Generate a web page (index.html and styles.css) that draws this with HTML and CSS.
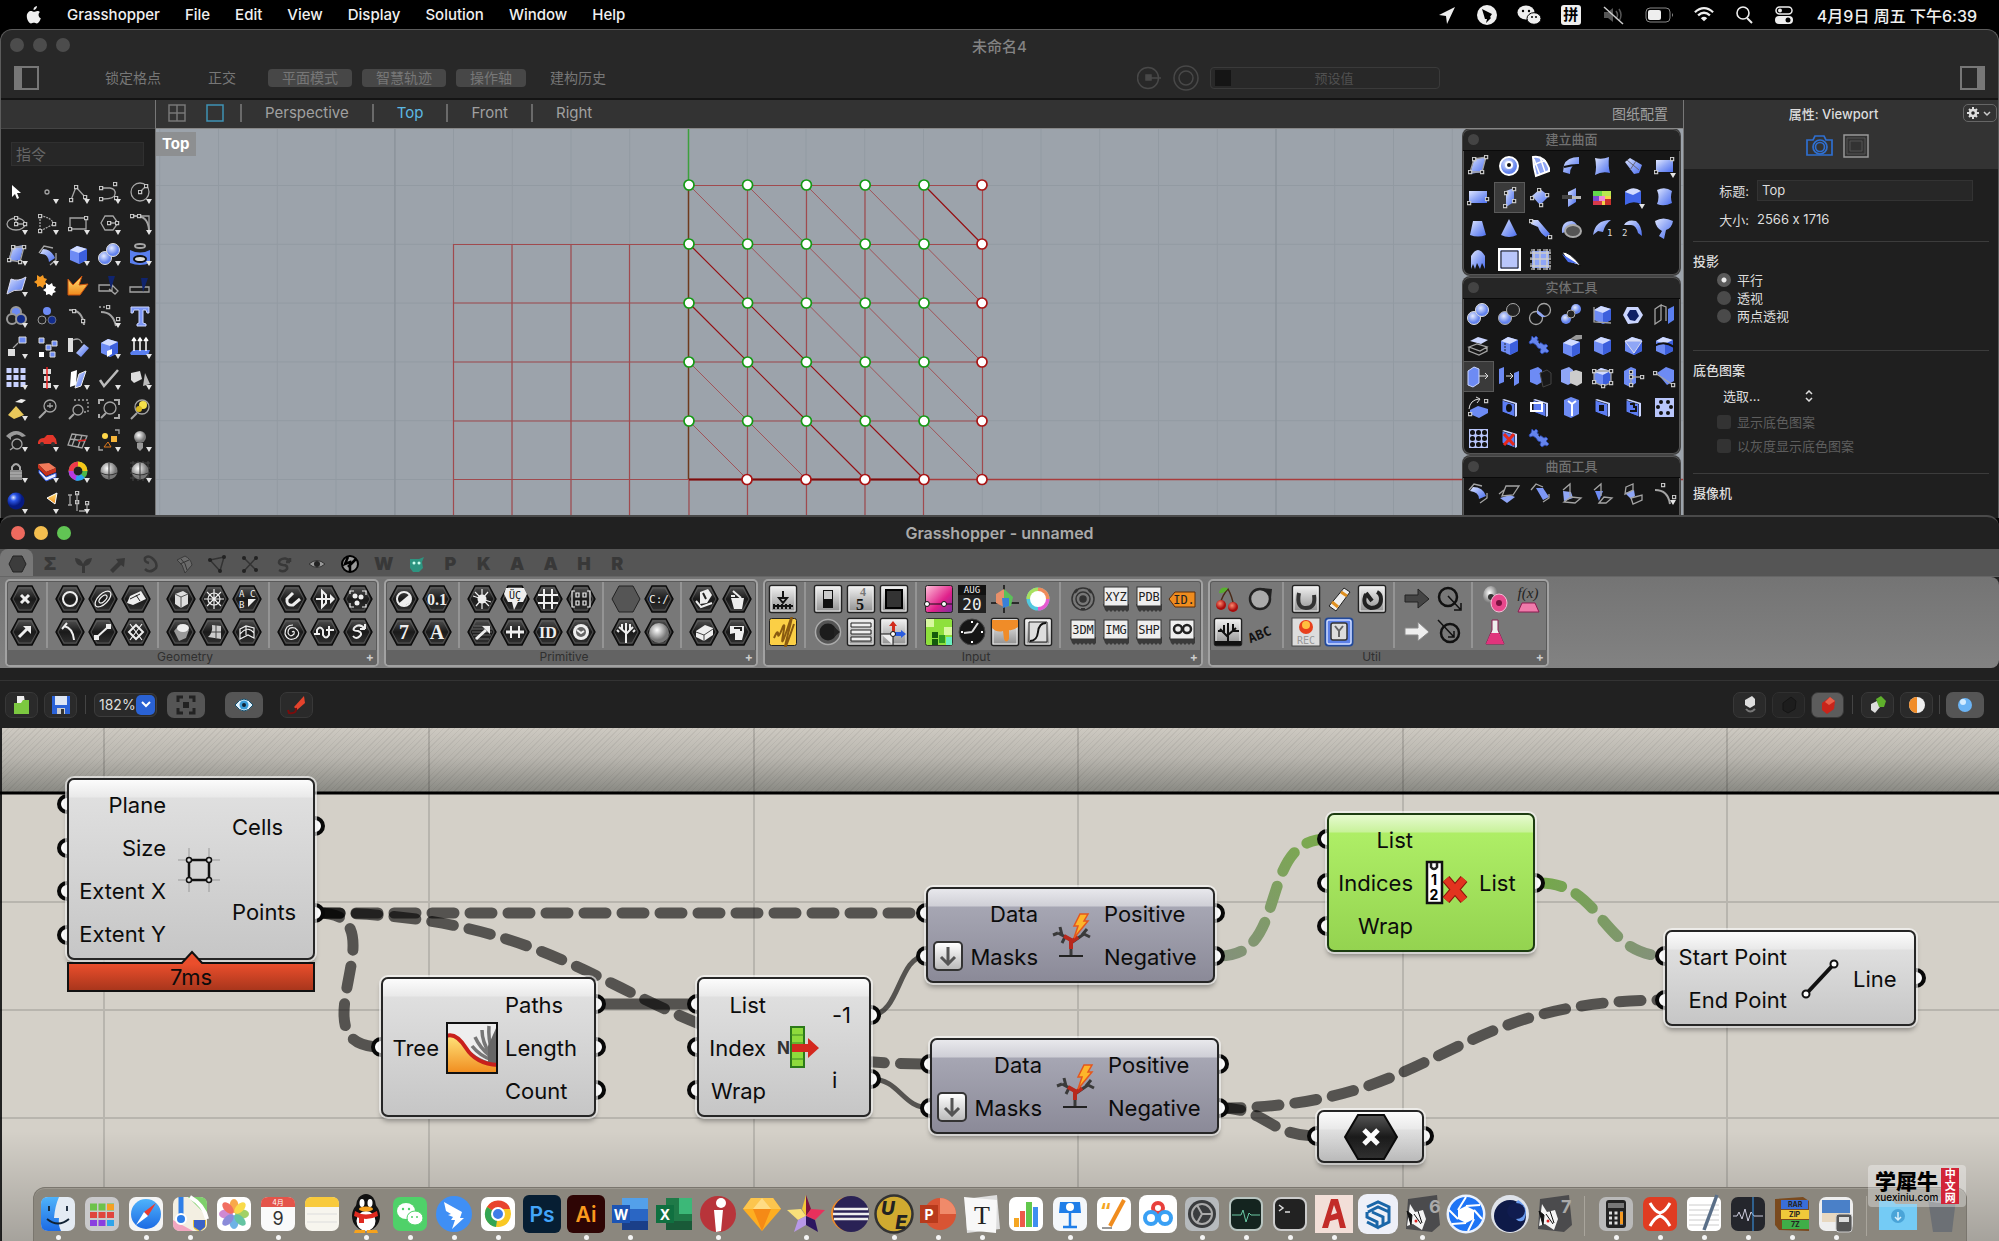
FILE: index.html
```html
<!DOCTYPE html>
<html lang="zh-CN">
<head>
<meta charset="utf-8">
<title>Grasshopper - unnamed</title>
<link rel="stylesheet" href="styles.css">
</head>
<body>
<svg class="defs" aria-hidden="true">
  <defs>
    <linearGradient id="blue" x1="0" y1="0" x2="1" y2="1"><stop offset="0" stop-color="#dfe6ff"/><stop offset=".5" stop-color="#8fa6f6"/><stop offset="1" stop-color="#4b6ef0"/></linearGradient>
    <radialGradient id="ball" cx=".4" cy=".35"><stop offset="0" stop-color="#e4eaff"/><stop offset="1" stop-color="#6484ee"/></radialGradient>
    <radialGradient id="deep" cx=".35" cy=".3"><stop offset="0" stop-color="#dfe8ff"/><stop offset=".4" stop-color="#2b56e8"/><stop offset="1" stop-color="#061a80"/></radialGradient>
    <radialGradient id="pearl" cx=".4" cy=".35"><stop offset="0" stop-color="#fff"/><stop offset="1" stop-color="#777"/></radialGradient>
    <radialGradient id="redball" cx=".4" cy=".35"><stop offset="0" stop-color="#ff8a70"/><stop offset="1" stop-color="#a80c0c"/></radialGradient>
    <linearGradient id="hexfill" x1="0" y1="0" x2="0" y2="1"><stop offset="0" stop-color="#555"/><stop offset=".5" stop-color="#1a1a1a"/><stop offset="1" stop-color="#333"/></linearGradient>
    <linearGradient id="silver" x1="0" y1="0" x2="0" y2="1"><stop offset="0" stop-color="#f4f4f4"/><stop offset="1" stop-color="#8d8d8d"/></linearGradient>
    <linearGradient id="gold" x1="0" y1="0" x2="0" y2="1"><stop offset="0" stop-color="#ffe37a"/><stop offset="1" stop-color="#f08a1c"/></linearGradient>
    <linearGradient id="pink" x1="0" y1="0" x2="1" y2="1"><stop offset="0" stop-color="#ffc3da"/><stop offset=".6" stop-color="#e0208a"/><stop offset="1" stop-color="#7a2e9e"/></linearGradient>
    <linearGradient id="sky" x1="0" y1="0" x2="0" y2="1"><stop offset="0" stop-color="#4fb3fb"/><stop offset="1" stop-color="#1c6ae4"/></linearGradient>
    <marker id="sq" viewBox="-3 -3 6 6" markerWidth="5" markerHeight="5" markerUnits="userSpaceOnUse"><rect x="-2" y="-2" width="4" height="4" fill="#222" stroke="#ccc" stroke-width="1.4"/></marker>
    <marker id="gdot" viewBox="-8 -8 16 16" markerWidth="16" markerHeight="16" markerUnits="userSpaceOnUse"><circle r="5" fill="#fff" stroke="#149a14" stroke-width="1.7"/></marker>
    <marker id="rdot" viewBox="-8 -8 16 16" markerWidth="16" markerHeight="16" markerUnits="userSpaceOnUse"><circle r="5" fill="#fff" stroke="#a81414" stroke-width="1.7"/></marker>
    <pattern id="grid" x="532" y="56" width="58.75" height="58.8" patternUnits="userSpaceOnUse"><path d="M.5 0V59M0 .5H59" stroke="#929aa2" fill="none"/></pattern>
    <symbol id="hex" viewBox="0 0 30 30"><path d="M8 2h14l7 13-7 13H8L1 15z" fill="url(#hexfill)" stroke="#0a0a0a" stroke-width="1.4"/><path d="M9 4h12l6 11-6 11H9L3 15z" fill="none" stroke="#666" stroke-width=".7"/></symbol>
    <symbol id="tile" viewBox="0 0 30 30"><rect x="1.500" y="1.500" width="27" height="27" rx="2" fill="url(#silver)" stroke="#222" stroke-width="1.5"/><rect x="3" y="3" width="24" height="24" fill="none" stroke="#eee"/></symbol>
    <symbol id="chip" viewBox="0 0 30 30"><path d="M2 20h26v6l-2 2-2-2-2 2-2-2-2 2-2-2-2 2-2-2-2 2-2-2-2 2-2-2z" fill="#3a3a3a"/><rect x="3" y="3" width="24" height="19" fill="#eee" stroke="#333"/></symbol>
    <symbol id="cube" viewBox="0 0 31 31"><path d="M7 11l7-4 10 3v11l-8 4-9-4z" fill="#6d8bf4"/><path d="M7 11l7-4 10 3-8 4z" fill="#d2dcff"/><path d="M16 14l8-4v11l-8 4z" fill="#3c5fdc"/></symbol>
    <symbol id="quad" viewBox="0 0 31 31"><path d="M11 8l12-2-4 15-12 2z" fill="url(#blue)"/></symbol>
    <symbol id="balls" viewBox="0 0 31 31"><circle cx="11" cy="19" r="6.500" fill="url(#ball)" stroke="#ddd"/><circle cx="19" cy="11" r="6.500" fill="url(#ball)" stroke="#ddd"/></symbol>
    <symbol id="plate" viewBox="0 0 31 31"><path d="M8 8l13 4v13L8 20z" fill="#5c7cf2" stroke="#111"/><path d="M8 8l2-1 13 4-2 1zM21 12l2-1v13l-2 1z" fill="#cbd6ff"/></symbol>
    <symbol id="fig" viewBox="0 0 31 31"><path d="M7 7l3 2 3-2 1 3 3 1-2 3 2 2-3 1-1 3-3-2-3 1 0-3-3-2 3-2z"/></symbol>
    <symbol id="figs" viewBox="0 0 31 31"><path d="M7 6l2 2 2-2 2 2-1 2 3 2 4 3 2-1 2 2-2 2 3 3-2 2-2-1-3 2-2-2 1-3-3-1-2-3-3-2-3 1-1-2 2-2z" fill="#6484ee" stroke="#2a48b0" stroke-width=".8"/><path d="M13 12l3-2-1 4z" fill="#161616"/></symbol>
    <symbol id="bolt" viewBox="0 0 44 46"><path d="M22 42V27L9 20M22 30l13-9M13 22l-2-8M9 20l-5 2M33 22l5-6M35 21l6 3M16 24l-3 6" fill="none" stroke="#3a3a3a" stroke-width="3"/><path d="M22 36V27l-7-4M22 29l7-5" fill="none" stroke="#b8281c" stroke-width="4"/><path d="M10 43h24" stroke="#222" stroke-width="2"/><path d="M31 1h8l-4 7h4L25 25l4-12h-4z" fill="#fdb52a" stroke="#e4571e" stroke-width="1.500"/></symbol>
    <symbol id="rhino" viewBox="0 0 40 40"><path d="M6 5l29-4 3 30-8 7-26-3z" fill="#4b4b4d"/><path d="M8 10l5 8 8-2 3 9-4 11-9-6-6 2z" fill="#f4f4f4"/><path d="M5 17l5 4-1 10zM12 20l7 10M16 17l4 12" stroke="#111" fill="#111"/><circle cx="14" cy="27" r="1.500" fill="#d22"/></symbol>
  </defs>
</svg>

<header class="menubar">
  <nav class="menus" aria-label="Menu">
    <button class="apple" aria-label="Apple"><svg viewBox="0 0 16 20" width="16" height="20"><path d="M11 1c0 2-1.500 4-3.500 4C7.300 3 9 1.300 11 1zM14 7c-2 1.300-2 5 .8 6.300C14 16 12.500 18.500 10.800 18.500c-1.200 0-1.600-.7-2.900-.7s-1.800.7-2.900.7C3 18.500.8 14.500.8 11.300.8 8 3 6 5 6c1.300 0 2.200.8 3.100.8S10 5.900 11.400 5.900c1 0 2 .4 2.600 1.100z" fill="#eee"/></svg></button>
    <button>Grasshopper</button><button>File</button><button>Edit</button><button>View</button><button>Display</button><button>Solution</button><button>Window</button><button>Help</button>
  </nav>
  <div class="status">
    <svg viewBox="0 0 20 20"><path d="M18 2L2 10l7 1 1 8z"/></svg>
    <svg viewBox="0 0 20 20"><circle cx="10" cy="10" r="10"/><path d="M5 4l10 5-2 3 1 1-5 5 1-4-2 0z" fill="#000"/></svg>
    <svg viewBox="0 0 24 20" class="wide"><ellipse cx="9" cy="7.500" rx="8.500" ry="7"/><circle cx="6" cy="6" r="1.200" fill="#000"/><circle cx="12" cy="6" r="1.200" fill="#000"/><ellipse cx="17" cy="13.500" rx="7" ry="5.800" stroke="#000"/><circle cx="15" cy="12" r="1" fill="#000"/><circle cx="19" cy="12" r="1" fill="#000"/></svg>
    <b class="ime">拼</b>
    <svg viewBox="0 0 24 20" class="wide"><path d="M3 7h4l5-4v14l-5-4H3z" fill="#555"/><path d="M15 6q3 4 0 8M18 4q4 6 0 12" stroke="#555" fill="none" stroke-width="1.500"/><path d="M3 2l19 17" stroke="#ccc" stroke-width="1.500"/></svg>
    <svg viewBox="0 0 29 20" class="wider"><rect x="1" y="3" width="24" height="14" rx="4" fill="none" stroke="#888"/><rect x="3" y="5" width="13" height="10" rx="2"/><path d="M27 8q2 2 0 4z" fill="#888"/></svg>
    <svg viewBox="0 0 22 20"><path d="M1 7q10-9 20 0M4.500 10.500q6.500-6 13 0" fill="none" stroke="#eee" stroke-width="2.500"/><path d="M7.500 13.500q3.500-3 7 0L11 17z"/></svg>
    <svg viewBox="0 0 20 20"><circle cx="9" cy="8" r="6" fill="none" stroke="#eee" stroke-width="1.600"/><path d="M13 13l5 5" stroke="#eee" stroke-width="2"/></svg>
    <svg viewBox="0 0 20 20"><rect x="2" y="2" width="16" height="7" rx="3.500" fill="none" stroke="#eee" stroke-width="1.500"/><circle cx="6" cy="5.500" r="2"/><rect x="1" y="11" width="18" height="8" rx="4"/><circle cx="14" cy="15" r="2.500" fill="#000"/></svg>
    <time>4月9日 周五 下午6:39</time>
  </div>
</header>

<section class="rhino">
  <div class="titlebar"><span class="lights off"><i></i><i></i><i></i></span><h1>未命名4</h1></div>
  <div class="osnap">
    <svg width="25" height="24" viewBox="0 0 25 24"><path d="M1 1h23v22H1z" fill="none" stroke="#777" stroke-width="2"/><path d="M1 1h7v22H1z" fill="#777"/></svg>
    <div class="modes"><button>锁定格点</button><button>正交</button><button class="on">平面模式</button><button class="on">智慧轨迹</button><button class="on">操作轴</button><button>建构历史</button></div>
    <div class="presets">
      <svg width="62" height="26" viewBox="0 0 62 26" fill="none" stroke="#484848" stroke-width="1.500"><circle cx="11" cy="13" r="10.500"/><path d="M12 13h12"/><path d="M9 10h5v5H9z" fill="#484848"/><circle cx="49" cy="13" r="12"/><circle cx="49" cy="13" r="7"/></svg>
      <button class="preset"><i></i><span>预设值</span></button>
    </div>
    <svg width="25" height="24" viewBox="0 0 25 24"><path d="M1 1h23v22H1z" fill="none" stroke="#777" stroke-width="2"/><path d="M17 1h7v22h-7z" fill="#777"/></svg>
  </div>
  <div class="work">
    <aside class="left">
      <div class="strip"></div>
      <input class="cmd" type="text" placeholder="指令" aria-label="指令">
      <div class="tools five">
        <button><svg viewBox="0 0 31 31"><path d="M11 8v12l3-3 2 5 2-1-2-5h4z" fill="#fff"/></svg></button>
        <button class="m"><svg viewBox="0 0 31 31"><circle class="l" cx="15" cy="15" r="2"/></svg></button>
        <button class="m"><svg viewBox="0 0 31 31"><path class="k" d="M8 23l5-13 9 10"/></svg></button>
        <button class="m"><svg viewBox="0 0 31 31"><path class="l" d="M9 11h7q6 1 5 6 0 5-12 5"/><path class="k0" d="M7 11L21 7 22 21 7 22"/></svg></button>
        <button class="m"><svg viewBox="0 0 31 31"><circle class="l" cx="15" cy="15" r="9"/><path class="k" d="M15 15l6-6"/></svg></button>

        <button class="m"><svg viewBox="0 0 31 31"><ellipse class="l" cx="15" cy="16" rx="9" ry="6"/><path class="k" d="M15 10v6h9"/></svg></button>
        <button class="m"><svg viewBox="0 0 31 31"><path class="l" d="M8 8v15M8 8q11 1 14 8L8 23" stroke-dasharray="2 1"/><path class="k0" d="M8 8l14 8-14 7"/></svg></button>
        <button class="m"><svg viewBox="0 0 31 31"><path class="l" d="M7 10h16v11H7z"/><path class="k0" d="M7 21L23 10"/></svg></button>
        <button class="m"><svg viewBox="0 0 31 31"><path class="l" d="M11 8h8l5 7-5 7h-8l-4-7z"/><path class="k" d="M15 15h8"/></svg></button>
        <button class="m"><svg viewBox="0 0 31 31"><path class="l w" d="M9 8q14-1 15 14"/><path class="l" d="M9 8h15v14"/><path class="k" d="M7 8h7"/></svg></button>

        <button class="m"><svg viewBox="0 0 31 31"><use href="#quad"/><path class="k" d="M12 8h11l-4 15-11-2z"/></svg></button>
        <button class="m"><svg viewBox="0 0 31 31"><path d="M11 10q8 0 12 9l-6 4q-1-9-9-8z" fill="url(#blue)"/><path class="l" d="M7 14l5-7 9 2M18 26l6-5v-7"/></svg></button>
        <button class="m"><svg viewBox="0 0 31 31"><use href="#cube"/></svg></button>
        <button class="m"><svg viewBox="0 0 31 31"><use href="#balls"/></svg></button>
        <button class="m"><svg viewBox="0 0 31 31"><ellipse class="l w" cx="15" cy="7" rx="5" ry="2"/><path d="M5 11q10 5 20 0v13q-10 4-20 0z" fill="#5a7ff0"/><ellipse cx="15" cy="20" rx="6" ry="3" fill="#ddd" stroke="#111" stroke-width="2"/></svg></button>

        <button class="m"><svg viewBox="0 0 31 31"><path d="M10 9q7 3 15-2l-4 13q-8-1-15 4z" fill="url(#blue)" stroke="#dde" /></svg></button>
        <button><svg viewBox="0 0 31 31"><use href="#fig" x="-2" y="-2" fill="#f59a23"/><use href="#fig" x="7" y="6" fill="#fff"/></svg></button>
        <button><svg viewBox="0 0 31 31"><path d="M5 25V9l5 6 9-9-3 9 9-1-8 11z" fill="url(#gold)" stroke="#c8500c"/></svg></button>
        <button><svg viewBox="0 0 31 31"><path class="l" d="M5 15h13v6H5zM18 15l6 6-3 3-6-5"/><path d="M14 6h7l-4 13z" fill="#10246e"/></svg></button>
        <button><svg viewBox="0 0 31 31"><path class="l" d="M5 17h19v5H5z"/><path d="M16 8h7l-5 14z" fill="#10246e"/></svg></button>

        <button class="m"><svg viewBox="0 0 31 31"><circle cx="15" cy="11" r="5" fill="#6d8bf4" stroke="#999" stroke-width="2"/><circle cx="11" cy="18" r="5" fill="#222" stroke="#999" stroke-width="2"/><circle cx="20" cy="18" r="5" fill="#122c8c" stroke="#999" stroke-width="2"/></svg></button>
        <button><svg viewBox="0 0 31 31"><circle cx="15" cy="10" r="4" fill="#6d8bf4"/><circle cx="10" cy="19" r="4" fill="#222" stroke="#999"/><circle cx="20" cy="19" r="4" fill="#122c8c" stroke="#999" stroke-width=".6"/></svg></button>
        <button><svg viewBox="0 0 31 31"><path class="l w" d="M6 9q13-1 15 15"/><path class="k0" d="M11 10l9 10"/></svg></button>
        <button class="m"><svg viewBox="0 0 31 31"><path class="l w" d="M7 11q12 0 15 14"/><path class="k0" d="M14 6l10 12"/><path class="l" d="M5 6h8" stroke-dasharray="2 2"/></svg></button>
        <button><svg viewBox="0 0 31 31"><path d="M6 6h18v6h-2l-1-3h-3v13l3 1v2h-9v-2l2-1V9H9l-1 3H6z" fill="#7d97f5" stroke="#ccd6ff"/></svg></button>

        <button class="m"><svg viewBox="0 0 31 31"><path d="M18 5h7v6h-7z" fill="#6d8bf4" stroke="#ddd"/><path d="M7 17h7v7H7z" fill="#ddd"/><path class="l" d="M12 16l5-5"/></svg></button>
        <button><svg viewBox="0 0 31 31"><path d="M7 6h5v5H7zM14 13h5v5h-5zM20 9h5v5h-5zM18 20h5v5h-5z" fill="#6d8bf4" stroke="#ddd"/><path d="M7 20h5v5H7z" fill="#fff"/></svg></button>
        <button><svg viewBox="0 0 31 31"><path d="M5 6h5v14H5z" fill="#ddd"/><path d="M13 21L21 12l5 4-8 9z" fill="url(#blue)"/><path class="l" d="M10 8q7-3 9 3"/></svg></button>
        <button class="m"><svg viewBox="0 0 31 31"><use href="#cube"/><path d="M13 25v-6l5-2v5z" fill="#fff"/></svg></button>
        <button class="m"><svg viewBox="0 0 31 31"><path d="M5 21l3-3h17l-2 5H6z" fill="#5a7ff0"/><path d="M9 19V8M15 19V8M21 19V8M7 9l2-3 2 3M13 9l2-3 2 3M19 9l2-3 2 3" stroke="#fff" stroke-width="1.500" fill="none"/></svg></button>

        <button class="m"><svg viewBox="0 0 31 31"><path d="M8 5v21M15 5v21M22 5v21" stroke="#c8d2ff" stroke-width="5" stroke-dasharray="5 2"/></svg></button>
        <button class="m"><svg viewBox="0 0 31 31"><path d="M11 6h8v5h-8zM12 13h6v5h-6zM11 20h8v5h-8z" fill="#ddd"/><path d="M15 4v22" stroke="#e22" stroke-width="1.500"/></svg></button>
        <button class="m"><svg viewBox="0 0 31 31"><path d="M8 9l6-2-1 15-6 2z" fill="#fff"/><path d="M16 11l7-3-5 15-6 2z" fill="url(#blue)" stroke="#eee"/></svg></button>
        <button class="m"><svg viewBox="0 0 31 31"><path d="M6 17l4 6L24 7" fill="none" stroke="#bbb" stroke-width="2.500"/></svg></button>
        <button class="m"><svg viewBox="0 0 31 31"><path d="M6 10l9-2 2 8-8 4-3-3z" fill="#ddd"/><path d="M20 10l5 11-7 2z" fill="#bbb"/></svg></button>

        <button class="m"><svg viewBox="0 0 31 31"><path d="M15 12l8 9-10 4-6-4z" fill="#e9c85a"/><path d="M14 8l6-3 5 1-4 3z" fill="#eee"/></svg></button>
        <button><svg viewBox="0 0 31 31"><circle class="l" cx="18" cy="12" r="6"/><path class="l w" d="M7 24l7-7"/><path class="l" d="M15 12h6M18 9v5"/></svg></button>
        <button><svg viewBox="0 0 31 31"><path class="l" d="M11 6h14v12h-4" stroke-dasharray="2 2"/><circle class="l" cx="15" cy="16" r="5"/><path class="l w" d="M6 25l5-5"/></svg></button>
        <button><svg viewBox="0 0 31 31"><circle class="l" cx="16" cy="14" r="6"/><path class="l w" d="M7 24l5-5"/><path d="M5 10V6h5M20 6h5v5M25 20v4h-5M5 20v4" stroke="#aaa" fill="none" stroke-width="2"/></svg></button>
        <button><svg viewBox="0 0 31 31"><circle class="l" cx="17" cy="13" r="7"/><circle cx="18" cy="11" r="4" fill="#f4e04a"/><circle cx="14" cy="15" r="3" fill="#d8b820"/><path class="l w" d="M6 25l6-6"/></svg></button>

        <button class="m"><svg viewBox="0 0 31 31"><path d="M5 11q10-10 20 0l-4 1q-5-5-11 0v3z" fill="#999"/><circle class="l" cx="16" cy="19" r="5"/><path class="l" d="M9 25l4-3"/></svg></button>
        <button class="m"><svg viewBox="0 0 31 31"><path d="M6 17q1-4 6-4l3-3h6l3 4 1 5H6z" fill="#e2362a"/><circle cx="10" cy="19" r="2" fill="#333"/><circle cx="21" cy="19" r="2" fill="#333"/></svg></button>
        <button class="m"><svg viewBox="0 0 31 31"><path class="l" d="M9 9l15 2-5 12-14-3zM7 14l15 2M13 10l-4 11M19 10l-4 12"/><path d="M15 16l8-1" stroke="#d22" stroke-width="1.500"/></svg></button>
        <button class="m"><svg viewBox="0 0 31 31"><circle cx="11" cy="11" r="3" fill="#ffd84a"/><path d="M17 11h6v6h-6z" fill="#f5b53a"/><path d="M10 22l4-5 3 5z" fill="none" stroke="#e07a1c"/><path class="l" d="M21 5h4v4M5 21v4h4"/></svg></button>
        <button class="m"><svg viewBox="0 0 31 31"><circle cx="15" cy="12" r="6" fill="url(#pearl)"/><path d="M12 18h6v5l-3 3-3-3z" fill="#999"/></svg></button>

        <button class="m"><svg viewBox="0 0 31 31"><path d="M11 14v-3q4-6 8 0v3" fill="none" stroke="#aaa" stroke-width="2"/><path d="M9 14h12v10H9z" fill="#8a8a8a"/><path d="M9 17h12M9 20h12" stroke="#bbb"/></svg></button>
        <button class="m"><svg viewBox="0 0 31 31"><path d="M6 8l11-1 7 5-10 4z" fill="#f07a5a"/><path d="M6 8l8 8v4L6 12zM14 16l10-4v4l-10 4z" fill="#c8301c"/><path d="M7 14l7 7 10-4v4l-10 4-7-8z" fill="#e8ecff" stroke="#3358d8"/></svg></button>
        <button class="m"><svg viewBox="0 0 31 31" fill="none" stroke-width="5"><circle cx="15" cy="15" r="7" stroke="#4cb848"/><path d="M15 8a7 7 0 0 1 7 7" stroke="#f5c518"/><path d="M8 15a7 7 0 0 1 7-7" stroke="#ee3a4a"/><path d="M15 22a7 7 0 0 1-7-7" stroke="#b63ae0"/><path d="M20 20a7 7 0 0 1-7 2" stroke="#2aa0f0"/></svg></button>
        <button><svg viewBox="0 0 31 31"><circle cx="15" cy="15" r="8.500" fill="url(#pearl)"/><path d="M7 17q8 4 16 0M15 7v16" stroke="#333" fill="none"/></svg></button>
        <button class="m"><svg viewBox="0 0 31 31"><path d="M5 7h20M5 12h20M5 17h20M5 22h20M8 5v20M13 5v20M18 5v20M23 5v20" stroke="#444"/><circle cx="15" cy="15" r="8.500" fill="url(#pearl)"/><path d="M7 17q8 4 16 0M15 7v16" stroke="#333" fill="none"/></svg></button>

        <button class="m"><svg viewBox="0 0 31 31"><circle cx="15" cy="14" r="8.500" fill="url(#deep)"/></svg></button>
        <button class="m"><svg viewBox="0 0 31 31"><path d="M15 11l10-5-2 11z" fill="url(#gold)" stroke="#fff"/></svg></button>
        <button class="m"><svg viewBox="0 0 31 31"><path class="l" d="M7 8v10M5 8h4M5 18h4"/><path class="k0" d="M14 6V15L24 16"/><path class="l" d="M14 6V24M24 16v9M16 24h6"/></svg></button>
      </div>
    </aside>

    <main class="center">
      <div class="tabs">
        <svg width="18" height="18" viewBox="0 0 18 18"><path d="M1 1h16v16H1zM9 1v16M1 9h16" fill="none" stroke="#777" stroke-width="1.500"/></svg>
        <svg width="18" height="18" viewBox="0 0 18 18"><path d="M1 1h16v16H1z" fill="none" stroke="#3f93b5" stroke-width="1.500"/></svg>
        <i></i><button>Perspective</button><i></i><button class="on">Top</button><i></i><button>Front</button><i></i><button>Right</button>
        <button class="layout">图纸配置</button>
      </div>
      <div class="view">
        <svg class="scene" width="100%" height="100%">
          <rect width="100%" height="100%" fill="url(#grid)"/>
          <path d="M239 0V390M1120 0V390" stroke="#878f97" fill="none"/>
          <path d="M532.500 0V56" stroke="#3da03d" stroke-width="1.500"/>
          <path d="M533 350.500H3000" stroke="#a83c3c" stroke-width="1.300"/>
          <g fill="none" stroke="#a04a4e" stroke-width="1.200">
            <path d="M297.500 115.500H826M297.500 174H826M297.500 233H826M297.500 292H826M297.500 350.500H533M533 56.500H826M297.500 115V388M356 115V388M415 115V388M473.500 115V388M533 350V388M591.500 56V388M650.500 56V388M709 56V388M767.500 56V388M826.500 56V350"/>
            <path stroke-width=".9" d="M533 56L826 350M591 56L826 292M650 56L826 233M709 56L826 174M533 233L650 350M533 292L591 350"/>
            <path stroke="#951014" d="M768 56L826 115M533 115L768 350M533 174L709 350"/>
            <path stroke="#6e3a1c" stroke-width="1.500" d="M532.500 56V350"/><path stroke="#7c0c0c" stroke-width="1.800" d="M533 350.500H768"/>
          </g>
          <g class="gd"><path d="M533 56h58.600h58.800h58.800h58.800M533 115h58.600h58.800h58.800h58.800M533 174h58.600h58.800h58.800h58.800M533 233h58.600h58.800h58.800h58.800M533 292h58.600h58.800h58.800h58.800"/></g>
          <g class="rd"><path d="M826 56v59v59v59v59v58.500M591 350.500h59h59h59"/></g>
        </svg>
        <b class="vlabel">Top</b>
        <div class="palettes">
          <section class="pal"><h2><i></i>建立曲面</h2>
            <div class="tools seven">
              <button><svg viewBox="0 0 31 31"><use href="#quad"/><path class="k" d="M11 8l12-2-4 15-12 0z"/></svg></button>
              <button><svg viewBox="0 0 31 31"><circle cx="15" cy="15" r="9" fill="url(#ball)" stroke="#fff" stroke-width="2"/><circle cx="15" cy="14" r="3" fill="#111" stroke="#fff" stroke-width="2"/></svg></button>
              <button><svg viewBox="0 0 31 31"><path d="M8 6q11-2 16 11l0 3-13 5-2-9z" fill="#8fa6f6" stroke="#fff" stroke-width="2"/><path d="M9 8l6 16M15 6l5 15M9 14q7-4 12-4" stroke="#fff" stroke-width="1.500" fill="none"/></svg></button>
              <button><svg viewBox="0 0 31 31"><path d="M8 14q3-8 15-8v7q-9 0-9 10l-7-2z" fill="url(#blue)"/><path d="M8 16q7-2 15-2" stroke="#111" stroke-width="2" fill="none"/></svg></button>
              <button><svg viewBox="0 0 31 31"><path d="M8 7q7 2 14-1-1 9 1 16-8-2-15 2 2-8 0-17z" fill="url(#blue)"/></svg></button>
              <button><svg viewBox="0 0 31 31"><path d="M7 11l5-4 12 7-3 8-5 1z" fill="url(#blue)"/><path d="M9 9l12 10M18 10l-6 9" stroke="#667" fill="none"/></svg></button>
              <button class="m"><svg viewBox="0 0 31 31"><path d="M7 9h17v12H7z" fill="url(#blue)"/><path class="k0" d="M7 21L23 8"/></svg></button>
              <button><svg viewBox="0 0 31 31"><path d="M6 9h18v12H6z" fill="url(#blue)"/><path class="k0" d="M6 21L24 17"/></svg></button>
              <button class="sel"><svg viewBox="0 0 31 31"><path d="M12 9l8-3v14l-8 5z" fill="url(#blue)"/><path class="k0" d="M12 11L20 7V19L11 24"/></svg></button>
              <button><svg viewBox="0 0 31 31"><path d="M7 14l8-7 9 7-9 9z" fill="url(#blue)"/><path class="k0" d="M7 16l7-8 8 5-6 10"/></svg></button>
              <button><svg viewBox="0 0 31 31"><path d="M12 10l8-4v14l-8 5z" fill="url(#blue)"/><path d="M6 13h10v4H6z" fill="#444"/><path d="M16 14h9v3h-9z" fill="#bbb"/></svg></button>
              <button><svg viewBox="0 0 31 31"><path d="M6 9h18v14H6z" fill="#f3d24a"/><path d="M6 9h9v5H6z" fill="#62d84c"/><path d="M15 9h9v5h-9z" fill="#b8e850"/><path d="M6 14h6v5H6z" fill="#7a4ad0"/><path d="M12 14h6v5h-6z" fill="#f08ad8"/><path d="M6 19h9v4H6z" fill="#d83a4a"/><path d="M18 17h6v6h-6z" fill="#c8302c"/></svg></button>
              <button class="m"><svg viewBox="0 0 31 31"><path d="M7 9q8 4 16 0v13q-8-4-16 1z" fill="#4166e8"/><path d="M7 10q8-7 16-1l-8 4z" fill="#d2dcff"/></svg></button>
              <button><svg viewBox="0 0 31 31"><path d="M8 8q8-4 15 1-2 6 0 12-8 4-15 1 3-7 0-14z" fill="url(#blue)"/></svg></button>
              <button><svg viewBox="0 0 31 31"><path d="M10 8h9l4 14q-8 3-16 0z" fill="url(#blue)"/></svg></button>
              <button><svg viewBox="0 0 31 31"><path d="M15 6l8 16q-8 4-16 0z" fill="url(#blue)"/></svg></button>
              <button><svg viewBox="0 0 31 31"><path d="M6 7h7l12 14-4 3q-6-4-8-10l-7-3z" fill="url(#blue)"/><path class="k0" d="M6 8l19 16"/></svg></button>
              <button><svg viewBox="0 0 31 31"><path d="M6 20q-1-12 10-12 6 2 5 8" fill="url(#blue)"/><ellipse cx="17" cy="18" rx="8" ry="6" fill="#555" stroke="#aaa" stroke-width="2"/></svg></button>
              <button><svg viewBox="0 0 31 31"><path d="M6 22q2-15 18-15-6 4-8 12l-5-1z" fill="url(#blue)"/><text x="20" y="23">1</text></svg></button>
              <button><svg viewBox="0 0 31 31"><path d="M6 12q3-6 12-4 6 5 6 15l-4-3q-2-8-7-8z" fill="url(#blue)"/><text x="4" y="23">2</text></svg></button>
              <button><svg viewBox="0 0 31 31"><path d="M6 8q8-5 18 0-1 7-7 9l-2 9-5-3 3-5q-6-3-7-10z" fill="url(#blue)"/></svg></button>
              <button><svg viewBox="0 0 31 31"><path d="M8 25V12q7-12 14 0v13l-3-6-2 6-3-6-2 6-2-5z" fill="url(#blue)"/></svg></button>
              <button><svg viewBox="0 0 31 31"><path d="M5 5h21v21H5z" fill="#b9c6fb" stroke="#fff" stroke-width="2"/><path d="M7 7h17v17H7z" fill="none" stroke="#111"/></svg></button>
              <button><svg viewBox="0 0 31 31"><path d="M7 7h17v17H7z" fill="#8fa6f6"/><path d="M5 9h21M5 15h21M5 22h21M9 5v21M15 5v21M22 5v21" stroke="#ccc" stroke-width="1.500"/><path class="l" d="M6 6h19v19H6z" stroke-dasharray="3 3"/></svg></button>
              <button><svg viewBox="0 0 31 31"><path d="M6 8q7-1 19 14l-12-4z" fill="#fff" stroke="#111"/><path d="M6 10l16 10-10-2z" fill="#4b6ef0"/></svg></button>
            </div>
          </section>
          <section class="pal"><h2><i></i>实体工具</h2>
            <div class="tools seven">
              <button><svg viewBox="0 0 31 31"><use href="#balls"/></svg></button>
              <button><svg viewBox="0 0 31 31"><circle cx="11" cy="19" r="6.500" fill="url(#ball)" stroke="#aaa"/><circle cx="19" cy="11" r="6.500" fill="#222" stroke="#aaa"/></svg></button>
              <button><svg viewBox="0 0 31 31"><circle class="l" cx="11" cy="19" r="6.500"/><circle class="l" cx="19" cy="11" r="6.500"/><path d="M13 13l5 4-1 0-4-3z" fill="#8fa6f6" stroke="#8fa6f6" stroke-width="2"/></svg></button>
              <button><svg viewBox="0 0 31 31"><circle cx="10" cy="20" r="5" fill="url(#ball)"/><circle cx="20" cy="10" r="5" fill="url(#ball)"/><circle cx="15" cy="15" r="4" fill="#222" stroke="#aaa"/></svg></button>
              <button><svg viewBox="0 0 31 31"><use href="#cube"/><path class="l" d="M7 8v15l17 1"/></svg></button>
              <button><svg viewBox="0 0 31 31"><path d="M9 8h11l5 8-5 8-10 1-5-9z" fill="#cbd6ff"/><path d="M12 11h6l3 6-4 5-5-1-3-5z" fill="#0f1f66"/></svg></button>
              <button><svg viewBox="0 0 31 31"><path class="l" d="M6 10l6-4v15l-6 4zM12 6l5 2v14"/><path d="M19 10l6-3v14l-6 4z" fill="#5a7ff0"/></svg></button>
              <button><svg viewBox="0 0 31 31"><path d="M7 11l8-4 10 3-7 4z" fill="#cbd6ff"/><path class="l" d="M6 17l8-3 10 3-7 4zM6 17v4l10 4 8-4v-4"/></svg></button>
              <button><svg viewBox="0 0 31 31"><use href="#cube"/><path d="M11 13v10" stroke="#223" stroke-dasharray="2 1"/></svg></button>
              <button><svg viewBox="0 0 31 31"><use href="#figs"/></svg></button>
              <button><svg viewBox="0 0 31 31"><use href="#cube" y="2"/><path d="M14 9l6-4 6 0v4l-6 1z" fill="#999"/></svg></button>
              <button><svg viewBox="0 0 31 31"><use href="#cube"/></svg></button>
              <button><svg viewBox="0 0 31 31"><use href="#cube"/><path d="M7 11l17 0-8 12z" fill="#8fa6f6" stroke="#dde"/></svg></button>
              <button><svg viewBox="0 0 31 31"><use href="#cube"/><path d="M5 16q10-6 20 1" fill="none" stroke="#111" stroke-width="2"/></svg></button>
              <button class="sel"><svg viewBox="0 0 31 31"><path d="M5 10l6-4 5 2v14l-6 4-5-2z" fill="#6d8bf4" stroke="#cbd6ff"/><path d="M16 15h9M22 12l3 3-3 3" fill="none" stroke="#ddd"/></svg></button>
              <button><svg viewBox="0 0 31 31"><path d="M5 8l5-2v15l-5 2zM20 12l5-2v12l-5 3z" fill="#6d8bf4"/><path d="M12 15h7M16 12l3 3-3 3" fill="none" stroke="#ddd"/></svg></button>
              <button><svg viewBox="0 0 31 31"><path d="M5 9l8-3 4 3v12l-5 3-7-3z" fill="#6d8bf4"/><path d="M15 12l7-3 4 3v11l-8 3z" fill="#191919" stroke="#444"/></svg></button>
              <button><svg viewBox="0 0 31 31"><path d="M5 9l8-3 4 3v12l-5 3-7-3z" fill="#8fa6f6"/><path d="M14 11l6-2 6 2v11l-5 3-7-3z" fill="#ccc"/></svg></button>
              <button><svg viewBox="0 0 31 31"><use href="#cube"/><path class="k" d="M7 10l17 0v12l-8 3-9-4z"/></svg></button>
              <button><svg viewBox="0 0 31 31"><path d="M6 10l7-4 5 2v14l-6 4-6-3z" fill="#6d8bf4"/><path class="k" d="M13 11v13M13 16h11"/></svg></button>
              <button><svg viewBox="0 0 31 31"><path d="M8 12l9-6 8 3v11l-7 4z" fill="#6d8bf4"/><path class="k" d="M6 12l18 12"/></svg></button>
              <button><svg viewBox="0 0 31 31"><path d="M7 18l8-4 10 3v4l-9 5-9-4z" fill="#6d8bf4"/><path d="M6 17q1-9 10-10M13 5l4 2-3 4" fill="none" stroke="#ddd"/><path class="k0" d="M23 9L7 22"/></svg></button>
              <button><svg viewBox="0 0 31 31"><use href="#plate"/><ellipse cx="15" cy="16" rx="3" ry="4" fill="#111"/></svg></button>
              <button><svg viewBox="0 0 31 31"><use href="#plate"/><path d="M6 11h11v8H6z" fill="none" stroke="#fff" stroke-width="2"/></svg></button>
              <button><svg viewBox="0 0 31 31"><path d="M8 8l7-3 8 3v14l-8 4-7-3z" fill="#6d8bf4"/><path d="M12 9l4 3 4-3M16 12v12" stroke="#fff" stroke-width="2" fill="none"/></svg></button>
              <button><svg viewBox="0 0 31 31"><use href="#plate"/><path d="M12 13h5v6h-5z" fill="#111"/></svg></button>
              <button><svg viewBox="0 0 31 31"><use href="#plate"/><path d="M12 12h4v4M12 19h6v-5" stroke="#111" stroke-width="2" fill="none"/></svg></button>
              <button><svg viewBox="0 0 31 31"><path d="M6 6h19v19H6z" fill="#b9c6fb"/><g fill="#111"><circle cx="12" cy="10" r="2"/><circle cx="19" cy="10" r="2"/><circle cx="22" cy="15" r="2"/><circle cx="19" cy="21" r="2"/><circle cx="12" cy="21" r="2"/><circle cx="9" cy="15" r="2"/></g></svg></button>
              <button><svg viewBox="0 0 31 31"><path d="M6 6h19v19H6z" fill="#b9c6fb"/><g stroke="#111" stroke-width="5" stroke-linecap="round" stroke-dasharray="0 6"><path d="M9.500 9.500h13M9.500 15.500h13M9.500 21.500h13"/></g></svg></button>
              <button><svg viewBox="0 0 31 31"><use href="#plate"/><path d="M10 11l10 11M20 11L10 22" stroke="#e8281c" stroke-width="3"/></svg></button>
              <button><svg viewBox="0 0 31 31"><use href="#figs"/></svg></button>
            </div>
          </section>
          <section class="pal last"><h2><i></i>曲面工具</h2>
            <div class="tools seven">
              <button><svg viewBox="0 0 31 31"><path d="M10 9q10 0 13 9l-7 3q0-7-9-8z" fill="url(#blue)"/><path class="l" d="M6 12l5-6 8 2M17 25l7-5v-5"/></svg></button>
              <button><svg viewBox="0 0 31 31"><path d="M6 20l10-3 5 2-8 6z" fill="#8fa6f6"/><path class="l" d="M12 8l13 0-6 9-11 1zM5 16l5-4"/></svg></button>
              <button><svg viewBox="0 0 31 31"><path d="M11 10h7l6 9-6 3z" fill="#7d97f5"/><path class="l" d="M6 12l5-6 7 3M18 24l6-4v-4"/></svg></button>
              <button><svg viewBox="0 0 31 31"><path d="M7 13l8 1 2 6-9 3z" fill="#8fa6f6"/><path class="l" d="M7 12l7-6v12M8 24l7-5 10 1-6 5z"/></svg></button>
              <button><svg viewBox="0 0 31 31"><path d="M8 13h8l-4 10z" fill="#6d8bf4"/><path class="l" d="M7 12l7-6v12M12 25l5-6 8 1-6 5z"/></svg></button>
              <button><svg viewBox="0 0 31 31"><path d="M7 15l9-3 1 6-4 3z" fill="#8fa6f6"/><path class="l" d="M8 9l7-3v6l-8 4zM13 20l11-3v5l-9 4z"/></svg></button>
              <button class="m"><svg viewBox="0 0 31 31"><path class="l w" d="M6 12q13 0 15 14"/><path class="k0" d="M14 7l11 12"/></svg></button>
            </div>
          </section>
        </div>
      </div>
    </main>

    <aside class="right">
      <div class="strip"><h2>属性: Viewport</h2><button class="gear" aria-label="选项"><svg width="30" height="14" viewBox="0 0 30 14"><path d="M8 1v12M2 7h12M4 3l8 8M12 3l-8 8" stroke="#ddd" stroke-width="2"/><circle cx="8" cy="7" r="3" fill="#222" stroke="#ddd" stroke-width="2.500"/><path d="M19 6l3 3 3-3" fill="none" stroke="#ccc" stroke-width="1.500"/></svg></button></div>
      <div class="pages">
        <svg width="28" height="22" viewBox="0 0 28 22" fill="none" stroke="#2f6fd0" stroke-width="1.700"><path d="M1 5h6l2-4h9l2 4h6v15H1z"/><circle cx="14" cy="12" r="7"/><circle cx="14" cy="12" r="4.500"/></svg>
        <svg width="26" height="24" viewBox="0 0 26 24" fill="none"><path d="M1 1h24v22H1z" stroke="#999" stroke-width="1.500"/><path d="M4 4h18v16H4zM7 7h12v10H7z" stroke="#555"/></svg>
      </div>
      <div class="props">
        <div class="row"><label for="ttl">标题:</label><input id="ttl" type="text" value="Top"></div>
        <div class="row"><span>大小:</span><span class="num">2566 x 1716</span></div>
        <hr>
        <h3>投影</h3>
        <div class="opts">
          <label><input type="radio" name="proj" checked>平行</label>
          <label><input type="radio" name="proj">透视</label>
          <label><input type="radio" name="proj">两点透视</label>
        </div>
        <hr>
        <h3>底色图案</h3>
        <div class="pick"><select aria-label="底色图案"><option>选取...</option></select><svg width="8" height="12" viewBox="0 0 8 12"><path d="M1 4l3-3 3 3M1 8l3 3 3-3" fill="none" stroke="#ddd" stroke-width="1.500"/></svg></div>
        <div class="checks">
          <label><input type="checkbox" disabled>显示底色图案</label>
          <label><input type="checkbox" disabled>以灰度显示底色图案</label>
        </div>
        <hr>
        <h3>摄像机</h3>
      </div>
    </aside>
  </div>
</section>

<section class="gh">
  <div class="ghtitle"><span class="lights"><i></i><i></i><i></i></span><h1>Grasshopper - unnamed</h1></div>
  <div class="cats">
    <button class="on"><svg viewBox="0 0 20 20"><path d="M6 2h9l4 8-4 8H6l-4-8z" fill="#3c3c3c" stroke="#222"/></svg></button>
    <button>Σ</button>
    <button><svg viewBox="0 0 20 20"><path d="M9 19v-7Q2 11 2 4q6 0 8 6 2-6 9-6-1 7-7 8v7z"/></svg></button>
    <button><svg viewBox="0 0 20 20"><path d="M3 16l8-8-2-3 9-1-1 9-3-2-8 8z"/></svg></button>
    <button><svg viewBox="0 0 20 20"><path class="s" d="M9 9Q4 8 5 4q3-3 7 0 6 5 4 10-6 6-11 1"/></svg></button>
    <button><svg viewBox="0 0 20 20"><path d="M3 6l8-4q6 3 7 9l-7 8-3-8z" fill="#6a6a6a" stroke="#3a3a3a"/><path d="M7 5q5 4 6 11M6 10l9-4" stroke="#333" fill="none"/></svg></button>
    <button><svg viewBox="0 0 20 20"><path class="t1" d="M3 6l14-3-4 14z"/><g fill="#222"><circle cx="3" cy="6" r="2"/><circle cx="17" cy="3" r="2"/><circle cx="13" cy="17" r="2"/></g></svg></button>
    <button><svg viewBox="0 0 20 20"><path class="t1" d="M4 17L16 4M4 4l12 12"/><g fill="#222"><circle cx="4" cy="17" r="2"/><circle cx="16" cy="4" r="2"/><circle cx="4" cy="4" r="2"/><circle cx="16" cy="16" r="2"/></g></svg></button>
    <button><svg viewBox="0 0 20 20"><path class="s" d="M16 8Q12 2 6 6q-3 4 3 5 5 0 4 4-3 4-8 1M16 8V4M16 8h-4"/></svg></button>
    <button><svg viewBox="0 0 20 20"><path d="M2 10q8-7 16 0-8 7-16 0z" fill="#999" stroke="#333"/><circle cx="10" cy="10" r="3" fill="#222"/></svg></button>
    <button><svg viewBox="0 0 20 20"><circle cx="10" cy="10" r="8" fill="#999" stroke="#000" stroke-width="2"/><path d="M10 18V8l-5 2 3-7M16 5l-8 8" stroke="#000" stroke-width="2.500" fill="none"/></svg></button>
    <button>W</button>
    <button><svg viewBox="0 0 20 20"><path d="M3 5h9l5-2-2 5 1 6-4 4H6l-3-4z" fill="#2e9480"/><circle cx="7" cy="9" r="1.500" fill="#cfe"/><circle cx="12" cy="9" r="1.500" fill="#cfe"/></svg></button>
    <button>P</button><button>K</button><button>A</button><button>A</button><button>H</button><button>R</button>
  </div>
  <div class="ribbon">
    <section class="grp"><div class="secs">
      <div class="sec">
        <button><svg viewBox="0 0 30 30"><use href="#hex"/><path class="h3" d="M11 11l8 8M19 11l-8 8"/></svg></button>
        <button><svg viewBox="0 0 30 30"><use href="#hex"/><path class="h3" d="M9 20l8-8"/><path class="f" d="M13 9h8v8z"/></svg></button>
      </div>
      <div class="sec c3">
        <button><svg viewBox="0 0 30 30"><use href="#hex"/><circle class="h2" cx="15" cy="15" r="7"/></svg></button>
        <button><svg viewBox="0 0 30 30"><use href="#hex"/><ellipse class="h1" cx="15" cy="15" rx="10" ry="5" transform="rotate(-45 15 15)"/><ellipse class="h1" cx="15" cy="15" rx="5" ry="2.500" transform="rotate(-45 15 15)"/></svg></button>
        <button><svg viewBox="0 0 30 30"><use href="#hex"/><path class="f" d="M9 12l11-5 5 8-13 6-6-2z"/><path d="M15 11l4 6M9 15l10-5" stroke="#222"/></svg></button>
        <button><svg viewBox="0 0 30 30"><use href="#hex"/><path class="h2" d="M9 9q9 2 10 14M7 12l5-6"/></svg></button>
        <button><svg viewBox="0 0 30 30"><use href="#hex"/><path class="h2" d="M9 20l11-10"/><path class="f" d="M6 18h5v5H6zM18 7h5v5h-5z"/></svg></button>
        <button><svg viewBox="0 0 30 30"><use href="#hex"/><path class="h2" d="M15 8l7 7-7 7-7-7z"/><path class="h1" d="M9 7l12 16M21 7L9 23"/></svg></button>
      </div>
      <div class="sec c3">
        <button><svg viewBox="0 0 30 30"><use href="#hex"/><path d="M9 10l8-3 5 3v10l-7 4-6-4z" fill="#ddd"/><path d="M15 13v11M9 10l6 3 7-3" stroke="#555" fill="none"/></svg></button>
        <button><svg viewBox="0 0 30 30"><use href="#hex"/><circle class="h1" cx="15" cy="15" r="6"/><path class="h1" d="M15 5v20M5 15h20M8 8l14 14M22 8L8 22"/></svg></button>
        <button><svg viewBox="0 0 30 30"><use href="#hex"/><text x="7" y="13" font-size="9">A</text><text x="18" y="13" font-size="9">C</text><text x="7" y="24" font-size="9">B</text><path class="f" d="M16 15h8l-8 8z"/></svg></button>
        <button><svg viewBox="0 0 30 30"><use href="#hex"/><path d="M8 14l6-7 9 6-3 8-7 3z" fill="#999"/><ellipse cx="17" cy="11" rx="6" ry="4" fill="#eee"/></svg></button>
        <button><svg viewBox="0 0 30 30"><use href="#hex"/><path d="M9 20q5-4 4-12l9 1v13z" fill="#ccc"/><path d="M17 8v13M12 15h10" stroke="#444"/></svg></button>
        <button><svg viewBox="0 0 30 30"><use href="#hex"/><path class="h1" d="M8 12l6-3 8 2v10l-6-3-8 4zM14 9v9M8 17q8-9 14-1"/></svg></button>
      </div>
      <div class="sec c3">
        <button><svg viewBox="0 0 30 30"><use href="#hex"/><path class="h3" d="M16 9l-6 6q-1 7 6 6l7-6"/></svg></button>
        <button><svg viewBox="0 0 30 30"><use href="#hex"/><path class="h2" d="M6 15h15M12 7v16l4-4V11z"/><path class="f" d="M20 10l5 5-5 5z"/></svg></button>
        <button><svg viewBox="0 0 30 30"><use href="#hex"/><path class="h1" d="M7 10V7h4M19 7h4v4M23 20v3h-4M11 23H7v-4"/><g class="f"><circle cx="12" cy="12" r="2.500"/><circle cx="18" cy="13" r="2.500"/><circle cx="14" cy="19" r="2.500"/></g></svg></button>
        <button><svg viewBox="0 0 30 30"><use href="#hex"/><path class="h1" d="M15 15q3-2 2 2-4 4-6-1 0-7 7-5 7 5 1 10-8 4-11-4 0-9 8-9"/></svg></button>
        <button><svg viewBox="0 0 30 30"><use href="#hex"/><path class="h2" d="M7 17v-4q3-5 6 0v5q3 5 6 0v-5M19 9v5M4 17h6M16 13h8"/></svg></button>
        <button><svg viewBox="0 0 30 30"><use href="#hex"/><path class="h2" d="M22 12q-5-6-10-2-4 4 3 4 5 2 2 5-4 4-7 0M22 12V7M22 12h-5"/></svg></button>
      </div>
    </div><h2>Geometry</h2></section>

    <section class="grp"><div class="secs">
      <div class="sec c2">
        <button><svg viewBox="0 0 30 30"><use href="#hex"/><circle class="h2" cx="15" cy="15" r="7"/><path class="f" d="M21 10L9 20a8 8 0 0 0 12-10z"/></svg></button>
        <button><svg viewBox="0 0 30 30"><use href="#hex"/><text class="sf" x="15" y="21" font-size="16">0.1</text></svg></button>
        <button><svg viewBox="0 0 30 30"><use href="#hex"/><text class="sf" x="15" y="22" font-size="20">7</text></svg></button>
        <button><svg viewBox="0 0 30 30"><use href="#hex"/><text class="sf" x="15" y="22" font-size="20">A</text></svg></button>
      </div>
      <div class="sec c4">
        <button><svg viewBox="0 0 30 30"><use href="#hex"/><circle class="f" cx="15" cy="15" r="4.500"/><path class="h1" d="M15 5v20M6 12l18 6M9 22L21 8M8 8l14 14"/></svg></button>
        <button><svg viewBox="0 0 30 30"><use href="#hex"/><path class="f" d="M6 4h18l3 6-4 8h-5l-4 8-2-8H8L4 10z"/><text x="15" y="15" font-size="10" style="fill:#111" text-anchor="middle">ÜÇ</text></svg></button>
        <button><svg viewBox="0 0 30 30"><use href="#hex"/><path class="h2" d="M11 5v20M19 5v20M5 11h20M5 19h20"/></svg></button>
        <button><svg viewBox="0 0 30 30"><use href="#hex"/><path class="h1" d="M9 7H6v16h3M21 7h3v16h-3M10 9h3v4h-3zM17 9h3v4h-3zM10 17h3v4h-3zM17 17h3v4h-3z"/></svg></button>
        <button><svg viewBox="0 0 30 30"><use href="#hex"/><path d="M7 9h16M5 12h20M5 15h20M6 18h18M8 22h14" stroke="#666"/><path class="h3" d="M9 22l10-9"/><path class="f" d="M15 9h8v8z"/></svg></button>
        <button><svg viewBox="0 0 30 30"><use href="#hex"/><path class="h3" d="M6 15h18"/><path class="h2" d="M11 9v12M19 9v12"/></svg></button>
        <button><svg viewBox="0 0 30 30"><use href="#hex"/><text class="sf" x="15" y="21" font-size="16">ID</text></svg></button>
        <button><svg viewBox="0 0 30 30"><use href="#hex"/><circle cx="15" cy="15" r="8" class="f"/><circle cx="15" cy="15" r="5" fill="#666"/><path class="h2" d="M11 13l4 3 3-2"/></svg></button>
      </div>
      <div class="sec c2">
        <button><svg viewBox="0 0 30 30"><path d="M8 2h14l7 13-7 13H8L1 15z" fill="#555" stroke="#222"/></svg></button>
        <button><svg viewBox="0 0 30 30"><use href="#hex"/><text x="15" y="19" font-size="11" text-anchor="middle">C:/</text></svg></button>
        <button><svg viewBox="0 0 30 30"><use href="#hex"/><path class="h2" d="M15 26V16L8 10M15 17l7-7M15 16V6M11 13V7M19 13V7M8 15l-2-2M22 15l2-2"/></svg></button>
        <button><svg viewBox="0 0 30 30"><use href="#hex"/><circle cx="15" cy="16" r="10" fill="url(#pearl)"/></svg></button>
      </div>
      <div class="sec c2">
        <button><svg viewBox="0 0 30 30"><use href="#hex"/><path class="f" d="M11 8l8-3 4 6-5 8-7 1z"/><path d="M14 9l3 6" stroke="#222" stroke-width="2"/><path class="h2" d="M7 17l5 6 11-4"/></svg></button>
        <button><svg viewBox="0 0 30 30"><use href="#hex"/><path class="f" d="M9 14h13l-2 11h-8z"/><path class="h2" d="M11 7l8 7M9 12h4"/></svg></button>
        <button><svg viewBox="0 0 30 30"><use href="#hex"/><path class="f" d="M7 14l9-6 8 3v7l-9 6-8-4z"/><path d="M7 15l8 3 9-6M15 18v6" stroke="#444" fill="none"/></svg></button>
        <button><svg viewBox="0 0 30 30"><use href="#hex"/><path class="f" d="M8 9h14v6l-2 8h-7v-7l-5 1z"/><path d="M12 11h7v3" stroke="#222" stroke-width="2" fill="none"/></svg></button>
      </div>
    </div><h2>Primitive</h2></section>

    <section class="grp"><div class="secs">
      <div class="sec">
        <button><svg viewBox="0 0 30 30"><use href="#tile"/><path d="M15 7v8M11 14h8l-4 5zM5 22h20M6 20v5M10 20v5M14 20v5M18 20v5M22 20v5" stroke="#111" stroke-width="2"/></svg></button>
        <button><svg viewBox="0 0 30 30"><rect x="1.500" y="1.500" width="27" height="27" rx="2" fill="#fbcf45" stroke="#222"/><path d="M6 21q4-9 4-4t4-5 1 6 5-8 0 7 6-10" fill="none" stroke="#8a5a10" stroke-width="2"/></svg></button>
      </div>
      <div class="sec c3">
        <button><svg viewBox="0 0 30 30"><use href="#tile"/><path d="M10 6h10v18H10z" fill="#111"/><path d="M11 7h8v8h-8z" fill="#ccc"/></svg></button>
        <button><svg viewBox="0 0 30 30"><use href="#tile"/><text class="sf" x="17" y="12" font-size="12" style="fill:#777">4</text><text class="sf" x="14" y="26" font-size="16" style="fill:#111">5</text></svg></button>
        <button><svg viewBox="0 0 30 30"><use href="#tile"/><path d="M7 6h16v18H7z" fill="#333" stroke="#000" stroke-width="2"/></svg></button>
        <button><svg viewBox="0 0 30 30"><circle cx="15" cy="15" r="12.500" fill="#555" stroke="#aaa" stroke-width="1.500"/><circle cx="15" cy="15" r="8.500" fill="#1c1c1c"/><path d="M21 10l6 5-6 5z" fill="#222"/></svg></button>
        <button><svg viewBox="0 0 30 30"><use href="#tile"/><path d="M5 6h20v4H5zM5 13h20v4H5zM5 20h20v4H5z" fill="#eee" stroke="#222"/></svg></button>
        <button><svg viewBox="0 0 30 30"><use href="#tile"/><path d="M2 17h12v11" stroke="#111" fill="#eee"/><path d="M14 4l4 5h-2v8h-3V9h-3z" fill="#d22c1c"/><path d="M27 17l-5-4v2h-7v4h7v2z" fill="#2a5ce0"/><circle cx="14" cy="17" r="2.500" fill="#fff" stroke="#111"/></svg></button>
      </div>
      <div class="sec c4">
        <button><svg viewBox="0 0 30 30"><rect x="1.500" y="1.500" width="27" height="27" rx="2" fill="url(#pink)" stroke="#222"/><path d="M2 20h26" stroke="#111"/><circle cx="3" cy="20" r="2.500" fill="#fff" stroke="#111"/><circle cx="20" cy="20" r="2.500" fill="#fff" stroke="#111"/></svg></button>
        <button><svg viewBox="0 0 30 30"><path d="M1 1h28v28H1z" fill="#222"/><path d="M1 1h28v10H1z" fill="#111"/><text x="15" y="9" font-size="9" text-anchor="middle">AUG</text><text x="15" y="26" font-size="16" text-anchor="middle">20</text></svg></button>
        <button><svg viewBox="0 0 30 30"><path d="M1 19h28M14 1v28" stroke="#111" stroke-width="1.500"/><path d="M6 10l8-5v18l-8-4z" fill="#e8906a"/><path d="M14 5l9 8-2 9-7 1z" fill="#5cc05a"/><path d="M12 14h7v8l-6 2z" fill="#3a80d8"/></svg></button>
        <button><svg viewBox="0 0 30 30" fill="none" stroke-width="5"><circle cx="15" cy="15" r="9" stroke="#52c8e0"/><path d="M15 6a9 9 0 0 1 9 9" stroke="#f08a5a"/><path d="M24 15a9 9 0 0 1-9 9" stroke="#e65ad0"/><path d="M6 15a9 9 0 0 1 9-9" stroke="#a8e060"/><circle cx="15" cy="15" r="8" fill="#fff" stroke="none"/></svg></button>
        <button><svg viewBox="0 0 30 30"><rect x="1.500" y="1.500" width="27" height="27" rx="2" fill="#8ee03c" stroke="#333"/><path d="M2 2h8v8H2zM20 10h8v8h-8z" fill="#d8f8a0"/><path d="M8 15h6v6H8zM8 22h6v6H8z" fill="#145a0c"/><path d="M15 18h6v8h-6z" fill="#2e9a20"/><path d="M22 20h6v8h-6z" fill="#6af0c0"/></svg></button>
        <button><svg viewBox="0 0 30 30"><circle cx="15" cy="15" r="13" fill="#161616" stroke="#444"/><path d="M15 15l6-9M15 15l-8 1" stroke="#ddd" stroke-width="2"/><path d="M15 4v2M15 24v2M4 15h2M24 15h2" stroke="#fff" stroke-width="2"/></svg></button>
        <button><svg viewBox="0 0 30 30"><use href="#tile"/><path d="M2 3h26v7q-5 4-9 3v9q-3 5-5 0l-1-8q-6 2-11-3z" fill="#f08c28"/></svg></button>
        <button><svg viewBox="0 0 30 30"><use href="#tile"/><path d="M6 5h18v20H6z" fill="#ddd" stroke="#222"/><path d="M7 24q7 0 8-9t8-9" fill="none" stroke="#111" stroke-width="2"/></svg></button>
      </div>
      <div class="sec c4">
        <button><svg viewBox="0 0 30 30" fill="none" stroke="#333" stroke-width="1.500"><circle cx="15" cy="15" r="11"/><circle cx="15" cy="15" r="7"/><circle cx="15" cy="15" r="3" fill="#333"/><path d="M7 6l2 2M23 6l-2 2M15 26v-2" stroke-width="4"/></svg></button>
        <button><svg viewBox="0 0 30 30"><use href="#chip"/><text class="ct" x="15" y="17">XYZ</text></svg></button>
        <button><svg viewBox="0 0 30 30"><use href="#chip"/><text class="ct" x="15" y="17">PDB</text></svg></button>
        <button><svg viewBox="0 0 30 30"><path d="M2 15l6-7h20v15H8z" fill="#f08c1e" stroke="#5a2c08"/><text class="ct" x="17" y="20">ID.</text></svg></button>
        <button><svg viewBox="0 0 30 30"><use href="#chip"/><text class="ct" x="15" y="17">3DM</text></svg></button>
        <button><svg viewBox="0 0 30 30"><use href="#chip"/><text class="ct" x="15" y="17">IMG</text></svg></button>
        <button><svg viewBox="0 0 30 30"><use href="#chip"/><text class="ct" x="15" y="17">SHP</text></svg></button>
        <button><svg viewBox="0 0 30 30"><use href="#chip"/><g fill="none" stroke="#222" stroke-width="2.500"><circle cx="11" cy="12" r="4"/><circle cx="20" cy="12" r="4"/></g></svg></button>
      </div>
    </div><h2>Input</h2></section>

    <section class="grp"><div class="secs">
      <div class="sec c2">
        <button><svg viewBox="0 0 30 30"><path d="M7 20Q10 10 15 5q4 7 6 18" fill="none" stroke="#4a2a18" stroke-width="1.500"/><path d="M15 4Q7 2 6 9q6 1 9-5z" fill="#58b030"/><circle cx="8" cy="21" r="5" fill="url(#redball)"/><circle cx="20" cy="23" r="5" fill="url(#redball)"/></svg></button>
        <button><svg viewBox="0 0 30 30"><path d="M16 4l10 1-1 9z" fill="#222"/><circle cx="14" cy="15" r="10" fill="#aaa" stroke="#222" stroke-width="2.500"/></svg></button>
        <button><svg viewBox="0 0 30 30"><use href="#tile"/><path d="M3 25h24v2H3zM15 26V15M15 20L7 12M15 18l8-7M15 16V6M11 16V8M20 13V7M9 14H5M21 14h5" stroke="#111" stroke-width="2" fill="none"/></svg></button>
        <button><svg viewBox="0 0 30 30"><text x="2" y="22" font-size="13" style="fill:#111" font-weight="700" transform="rotate(-22 14 18)">ABC</text></svg></button>
      </div>
      <div class="sec c3">
        <button><svg viewBox="0 0 30 30"><use href="#tile"/><path d="M8 9q-3 15 7 15t8-13" fill="none" stroke="#333" stroke-width="4"/></svg></button>
        <button><svg viewBox="0 0 30 30"><path d="M5 22L20 4l6 4L12 27z" fill="#eee" stroke="#222"/><path d="M8 18l6 5M17 8l6 4" stroke="#e09020" stroke-width="3"/></svg></button>
        <button><svg viewBox="0 0 30 30"><use href="#tile"/><path d="M9 10q-5 11 5 14 10 0 10-9 0-5-4-7M15 17l-6-8" fill="none" stroke="#222" stroke-width="4"/></svg></button>
        <button><svg viewBox="0 0 30 30"><rect x="1" y="1" width="28" height="28" fill="#ddd" stroke="#444"/><circle cx="15" cy="10" r="7" fill="#e8401c"/><circle cx="15" cy="8" r="4" fill="#ffc040"/><text x="15" y="27" font-size="10" style="fill:#999" text-anchor="middle">REC</text></svg></button>
        <button><svg viewBox="0 0 30 30"><rect x="1.500" y="1.500" width="27" height="27" rx="3" fill="#5c80e8" stroke="#234a9a" stroke-width="2"/><rect x="3" y="3" width="24" height="24" rx="2" fill="none" stroke="#cfdcff" stroke-width="1.500"/><rect x="7" y="6" width="16" height="17" rx="2" fill="#ddd" stroke="#333" stroke-width="1.500"/><path d="M11 9l4 5 4-5M15 14v6" fill="none" stroke="#666" stroke-width="2"/></svg></button>
      </div>
      <div class="sec c2">
        <button><svg viewBox="0 0 30 30"><path d="M3 11h13V5l11 10-11 9v-6H3z" fill="#444" stroke="#222"/></svg></button>
        <button><svg viewBox="0 0 30 30" fill="none" stroke="#111" stroke-width="2.500"><circle cx="13" cy="13" r="9"/><path d="M13 12l12 13M26 19v7h-7" stroke-width="1.500"/></svg></button>
        <button><svg viewBox="0 0 30 30"><path d="M3 11h13V5l11 10-11 9v-6H3z" fill="#eee" stroke="#888"/></svg></button>
        <button><svg viewBox="0 0 30 30" fill="none" stroke="#111" stroke-width="2.500"><circle cx="15" cy="16" r="9"/><path d="M3 3l16 17M19 14v6h-6" stroke-width="1.500"/></svg></button>
      </div>
      <div class="sec c2">
        <button><svg viewBox="0 0 30 30"><ellipse cx="11" cy="12" rx="8" ry="10" fill="url(#pearl)"/><circle cx="11" cy="13" r="3" fill="#333"/><ellipse cx="19" cy="19" rx="8" ry="9" fill="#e8488c" stroke="#f4c0d8"/><circle cx="19" cy="19" r="3" fill="#7a1040"/></svg></button>
        <button><svg viewBox="0 0 30 30"><text class="fx" x="15" y="14">f(x)</text><path d="M9 19h13l4 9H5z" fill="#f07aaa" stroke="#8a1c50"/></svg></button>
        <button><svg viewBox="0 0 30 30"><path d="M12 3h6v10l6 14H6l6-14z" fill="#eee" stroke="#8a1c50"/><path d="M11 16h8l5 11H6z" fill="#e0347c"/></svg></button>
      </div>
    </div><h2>Util</h2></section>
  </div>

  <div class="bar">
    <button class="b1"><svg viewBox="0 0 20 20"><path d="M5 1h7l1 7H5z" fill="#eee"/><path d="M2 8h7l2-3h6v14H2z" fill="#7cc840"/></svg></button>
    <button class="b1"><svg viewBox="0 0 20 20"><path d="M1 1h18v18H1z" fill="#2a62d8"/><path d="M4 1h12v9H4z" fill="#dde6f4"/><path d="M6 13h8v6H6z" fill="#ccc"/><path d="M10 14h3v5h-3z" fill="#333"/></svg></button>
    <i></i>
    <label class="zoom"><select aria-label="Zoom"><option>182%</option></select><span><svg width="10" height="7" viewBox="0 0 10 7"><path d="M1 1l4 4 4-4" fill="none" stroke="#fff" stroke-width="2"/></svg></span></label>
    <button class="b2 fit"><svg viewBox="0 0 20 20"><path d="M2 7V2h5M13 2h5v5M18 13v5h-5M7 18H2v-5" fill="none" stroke="#222" stroke-width="3"/><path d="M7 7h6v6H7z" fill="#222"/></svg></button>
    <button class="b2 eye"><svg viewBox="0 0 20 20"><path d="M1 10q9-12 18 0-9 12-18 0z" fill="#dff2ff" stroke="#16506e"/><circle cx="10" cy="10" r="4.500" fill="#3a9cd8"/><circle cx="10" cy="10" r="2" fill="#123"/></svg></button>
    <button class="b1 brush"><svg viewBox="0 0 20 20"><path d="M17 1l1 7-8 7-3-3z" fill="#e4432c"/><path d="M9 13q1 6-7 5l-1-3" fill="none" stroke="#7a0c0c" stroke-width="2"/></svg></button>
    <span class="grow"></span>
    <button class="b1"><svg viewBox="0 0 20 20"><path d="M5 5l7-4 3 3v6l-5 3-5-3z" fill="#ddd"/><path d="M6 14q4 5 9 0" fill="none" stroke="#777" stroke-width="2"/></svg></button>
    <button class="b1 dim"><svg viewBox="0 0 20 20"><path d="M4 8l8-6 5 4-1 8-7 4-5-3z" fill="#1d1d1d" stroke="#151515"/></svg></button>
    <button class="b1 lit"><svg viewBox="0 0 20 20"><path d="M4 8l8-6 5 4-1 8-7 5-5-4z" fill="#c8241a"/><path d="M12 2l5 4-6 4-4-3z" fill="#e8604a"/></svg></button>
    <i></i>
    <button class="b1"><svg viewBox="0 0 20 20"><path d="M3 9l6-3 3 6-5 6-4-3z" fill="#ddd"/><path d="M8 4l5-3 5 5-2 6-5 0z" fill="#5fb02c"/></svg></button>
    <button class="b1"><svg viewBox="0 0 20 20"><circle cx="10" cy="10" r="8" fill="#eee"/><path d="M10 2a8 8 0 0 0 0 16z" fill="#f08c28"/></svg></button>
    <i class="near"></i>
    <button class="b2"><svg viewBox="0 0 20 20"><circle cx="10" cy="10" r="7" fill="#6cb4f4"/><circle cx="8" cy="7" r="3" fill="#d4ecff"/></svg></button>
  </div>

  <div class="canvas">
    <div class="sheet"></div>
    <svg class="wires" width="100%" height="100%">
      <defs>
        <linearGradient id="w1" gradientUnits="userSpaceOnUse" x1="1215" y1="228" x2="1327" y2="111"><stop offset="0" stop-color="#84907c"/><stop offset="1" stop-color="#7aab4c"/></linearGradient>
        <linearGradient id="w2" gradientUnits="userSpaceOnUse" x1="1535" y1="155" x2="1665" y2="228"><stop offset="0" stop-color="#74a84a"/><stop offset="1" stop-color="#84907c"/></linearGradient>
      </defs>
      <path class="gl" d="M104 0V600M429 0V600M754 0V600M1078 0V600M1403 0V600M1727 0V600M0 174H3000M0 282H3000M0 390H3000"/>
      <path d="M0 65H3000" stroke="#000" stroke-width="3"/>
      <g class="wire">
        <path class="d" d="M318 185H926"/>
        <path class="d" d="M318 185C622 185 622 336 930 336"/>
        <path class="d" d="M318 185C405 185 291 319 381 319"/>
        <path d="M596 276H697"/>
        <path class="d" d="M1219 380C1442 380 1442 272 1665 272"/>
        <path class="d" d="M1219 380C1268 380 1268 408 1317 408"/>
        <path class="thin" d="M871 287C900 287 898 228 926 228M871 351C900 351 902 380 930 380"/>
      </g>
      <g class="wire g"><path class="d" d="M1220 228C1290 228 1257 111 1327 111"/><path class="d" d="M1540 155C1602 155 1602 228 1665 228"/></g>
      <g class="grip">
        <circle cx="67" cy="76" r="8"/><circle cx="67" cy="120" r="8"/><circle cx="67" cy="163" r="8"/><circle cx="67" cy="207" r="8"/><circle cx="315" cy="98" r="8"/><circle cx="315" cy="185" r="8"/>
        <circle cx="381" cy="319" r="8"/><circle cx="596" cy="276" r="8"/><circle cx="596" cy="319" r="8"/><circle cx="596" cy="362" r="8"/>
        <circle cx="697" cy="276" r="8"/><circle cx="697" cy="319" r="8"/><circle cx="697" cy="362" r="8"/><circle cx="871" cy="287" r="8"/><circle cx="871" cy="351" r="8"/>
        <circle cx="926" cy="185" r="8"/><circle cx="926" cy="228" r="8"/><circle cx="1215" cy="185" r="8"/><circle cx="1215" cy="228" r="8"/>
        <circle cx="930" cy="336" r="8"/><circle cx="930" cy="380" r="8"/><circle cx="1219" cy="336" r="8"/><circle cx="1219" cy="380" r="8"/>
        <circle cx="1327" cy="111" r="8"/><circle cx="1327" cy="155" r="8"/><circle cx="1327" cy="198" r="8"/><circle cx="1535" cy="155" r="8"/>
        <circle cx="1665" cy="228" r="8"/><circle cx="1665" cy="272" r="8"/><circle cx="1916" cy="250" r="8"/>
        <circle cx="1317" cy="408" r="8"/><circle cx="1424" cy="408" r="8"/>
      </g>
    </svg>

    <div class="node n-sq">
      <div class="in"><span>Plane</span><span>Size</span><span>Extent X</span><span>Extent Y</span></div>
      <svg width="44" height="46" viewBox="0 0 44 46"><path d="M12 1v44M32 1v44M1 13h42M1 33h42" stroke="#999" fill="none"/><path d="M12 13h20v20H12z" fill="none" stroke="#111" stroke-width="2.500"/><g fill="#ddd" stroke="#111" stroke-width="1.500"><circle cx="12" cy="13" r="2.500"/><circle cx="32" cy="13" r="2.500"/><circle cx="12" cy="33" r="2.500"/><circle cx="32" cy="33" r="2.500"/></g></svg>
      <div class="out"><span>Cells</span><span>Points</span></div>
    </div>
    <div class="prof">7ms<svg width="26" height="14" viewBox="0 0 26 14"><path d="M2 14L13 2l11 12z" fill="#ea4e2c"/><path d="M2 14L13 2l11 12" fill="none" stroke="#111" stroke-width="2"/></svg></div>
    <div class="node n-tree">
      <div class="in"><span>Tree</span></div>
      <svg width="52" height="52" viewBox="0 0 52 52"><path d="M0 0h52v52H0z" fill="#eee"/><path d="M46 38Q34 34 26 24M44 34Q34 26 29 15M44 32Q36 20 36 8M46 30Q42 16 43 4M44 42Q32 38 25 32" stroke="#777" stroke-width="3.500" fill="none"/><path d="M42 24L51 4V46H42z" fill="#666"/><path d="M0 14Q12 12 22 28T52 44V52H0z" fill="url(#gold)"/><path d="M0 14Q10 10 20 26T52 43" fill="none" stroke="#c8201c" stroke-width="4"/><path d="M1 1h50v50H1z" fill="none" stroke="#111" stroke-width="2"/></svg>
      <div class="out"><span>Paths</span><span>Length</span><span>Count</span></div>
    </div>
    <div class="node n-item">
      <div class="in"><span>List</span><span>Index</span><span>Wrap</span></div>
      <svg width="44" height="46" viewBox="0 0 44 46"><path d="M14 2h13v40H14z" fill="#8edb3c" stroke="#2c7a1a" stroke-width="2"/><path d="M14 10h13M14 18h13M14 34h13" stroke="#3c8a22"/><path d="M15 19h16v-6l11 10-11 10v-6H15z" fill="#d4281e"/><text x="0" y="29" font-size="17" font-weight="700" fill="#333">N</text></svg>
      <div class="out"><span>-1</span><span>i</span></div>
    </div>
    <div class="node slate n-d1">
      <div class="in"><span>Data</span><span>Masks</span></div>
      <svg width="44" height="46"><use href="#bolt"/></svg>
      <div class="out"><span>Positive</span><span>Negative</span></div>
      <i class="down"><svg width="18" height="20" viewBox="0 0 18 20"><path d="M9 1v17M2 11l7 7 7-7" fill="none" stroke="#555" stroke-width="3"/></svg></i>
    </div>
    <div class="node slate n-d2">
      <div class="in"><span>Data</span><span>Masks</span></div>
      <svg width="44" height="46"><use href="#bolt"/></svg>
      <div class="out"><span>Positive</span><span>Negative</span></div>
      <i class="down"><svg width="18" height="20" viewBox="0 0 18 20"><path d="M9 1v17M2 11l7 7 7-7" fill="none" stroke="#555" stroke-width="3"/></svg></i>
    </div>
    <div class="node green n-cull">
      <div class="in"><span>List</span><span>Indices</span><span>Wrap</span></div>
      <svg width="44" height="46" viewBox="0 0 44 46"><path d="M3 2h15v41H3z" fill="#fff" stroke="#111" stroke-width="2.500"/><path d="M7 3v4q3 4 6 0V3" fill="none" stroke="#222" stroke-width="2.500"/><text x="10" y="25" font-size="14" text-anchor="middle" font-weight="700">1</text><text x="10" y="40" font-size="14" text-anchor="middle" font-weight="700">2</text><path d="M22 19l18 21M40 19L22 40" stroke="#8a140c" stroke-width="9"/><path d="M22 19l18 21M40 19L22 40" stroke="#e2331f" stroke-width="7"/></svg>
      <div class="out"><span>List</span></div>
    </div>
    <div class="node n-line">
      <div class="in"><span>Start Point</span><span>End Point</span></div>
      <svg width="44" height="46" viewBox="0 0 44 46"><path d="M9 37L36 8" stroke="#111" stroke-width="4"/><circle cx="8" cy="38" r="3.500" fill="#fff" stroke="#111" stroke-width="2"/><circle cx="36" cy="8" r="3.500" fill="#fff" stroke="#111" stroke-width="2"/></svg>
      <div class="out"><span>Line</span></div>
    </div>
    <div class="node n-pt"><svg width="54" height="48" viewBox="0 0 54 48"><path d="M14 2h26l13 22-13 22H14L1 24z" fill="url(#hexfill)" stroke="#0a0a0a" stroke-width="2"/><path d="M20 17l14 14M34 17L20 31" stroke="#fff" stroke-width="5"/></svg></div>
  </div>

  <footer class="dock">
    <button class="r"><svg viewBox="0 0 40 40"><rect x="3" y="3" width="34" height="34" rx="7" fill="#e4ebf3"/><path d="M21 3H10q-7 0-7 7v20q0 7 7 7h13q-3-6-2-13h-5q1-12 5-21z" fill="url(#sky)"/><path d="M11 12v5M29 12v5M9 25q11 9 22 0" fill="none" stroke="#123" stroke-width="1.800"/></svg></button>
    <button><svg viewBox="0 0 40 40"><rect x="3" y="3" width="34" height="34" rx="7" fill="#c9c9cb"/><path d="M8 13h24" stroke="#6cc24a" stroke-width="7" stroke-dasharray="7 1.500"/><path d="M8 21h24" stroke="#e0443e" stroke-width="6" stroke-dasharray="7 1.500"/><path d="M8 29h24" stroke="#8a3ee0" stroke-width="6" stroke-dasharray="7 1.500"/><path d="M25 10h7v6h-7z" fill="#f5a023"/><path d="M25 26h7v6h-7z" fill="#2fa4ea"/></svg></button>
    <button class="r"><svg viewBox="0 0 40 40"><rect x="3" y="3" width="34" height="34" rx="7" fill="#f4f4f4"/><circle cx="20" cy="20" r="15" fill="url(#sky)"/><path d="M30 9L18 18l4 4z" fill="#ec3b2e"/><path d="M10 31l8-13 4 4z" fill="#fff"/></svg></button>
    <button class="r"><svg viewBox="0 0 40 40"><rect x="3" y="3" width="34" height="34" rx="7" fill="#f3efe2"/><path d="M18 3h12q7 0 7 7v12z" fill="#7ed06c"/><path d="M20 3q14 8 17 22" fill="none" stroke="#fff" stroke-width="4"/><path d="M3 26l20 11H10q-7 0-7-7z" fill="#f2a6c0"/><path d="M11 3v22" stroke="#2f7fe8" stroke-width="5"/><circle cx="11" cy="25" r="5" fill="#2f7fe8" stroke="#fff" stroke-width="2"/><path d="M23 26h13v5q-1 5-7 6-6-1-6-6z" fill="#e9c23a"/><path d="M24 26h11v7l-5 4-6-4z" fill="#3a62c8"/></svg></button>
    <button><svg viewBox="0 0 40 40"><rect x="3" y="3" width="34" height="34" rx="7" fill="#fff"/><g opacity=".8"><ellipse cx="20" cy="12" rx="4.500" ry="7" fill="#f7931e"/><ellipse cx="20" cy="28" rx="4.500" ry="7" fill="#4b9fe0"/><ellipse cx="12" cy="20" rx="7" ry="4.500" fill="#c46cc8"/><ellipse cx="28" cy="20" rx="7" ry="4.500" fill="#8cc63f"/><ellipse cx="14" cy="14" rx="4" ry="7" fill="#ee4a3a" transform="rotate(-45 14 14)"/><ellipse cx="26" cy="14" rx="4" ry="7" fill="#f8d21e" transform="rotate(45 26 14)"/><ellipse cx="14" cy="26" rx="4" ry="7" fill="#6f6fd0" transform="rotate(45 14 26)"/><ellipse cx="26" cy="26" rx="4" ry="7" fill="#3fb68b" transform="rotate(-45 26 26)"/></g></svg></button>
    <button class="r"><svg viewBox="0 0 40 40"><rect x="3" y="3" width="34" height="34" rx="7" fill="#fafafa"/><path d="M3 13v-3q0-7 7-7h20q7 0 7 7v3z" fill="#e4544a"/><text class="cj" x="20" y="11" font-size="7" fill="#fff">4月</text><text class="cj" x="20" y="31" font-size="18" fill="#333">9</text></svg></button>
    <button><svg viewBox="0 0 40 40"><rect x="3" y="3" width="34" height="34" rx="7" fill="#f7f5ee"/><path d="M3 13v-3q0-7 7-7h20q7 0 7 7v3z" fill="#f8ca3c"/><path d="M5 20h30M5 28h30" stroke="#ddd"/></svg></button>
    <button class="r"><svg viewBox="0 0 40 40"><ellipse cx="20" cy="22" rx="14" ry="15" fill="#111"/><ellipse cx="20" cy="12" rx="10" ry="12" fill="#111"/><ellipse cx="20" cy="27" rx="9.500" ry="10" fill="#fff"/><ellipse cx="16" cy="9" rx="2.500" ry="4" fill="#fff"/><ellipse cx="24" cy="9" rx="2.500" ry="4" fill="#fff"/><ellipse cx="20" cy="15" rx="7" ry="2.500" fill="#f5a21e"/><path d="M9 17q11 7 22 0l1 5q-12 6-24 0z" fill="#e02a20"/><path d="M13 22h5v7h-5z" fill="#e02a20"/><path d="M9 36h10v3H8zM21 36h10l1 3H21z" fill="#f5a21e"/></svg></button>
    <button class="r"><svg viewBox="0 0 40 40"><rect x="3" y="3" width="34" height="34" rx="7" fill="#4fd169"/><ellipse cx="16" cy="17" rx="9" ry="8" fill="#fff"/><ellipse cx="25" cy="24" rx="8" ry="7" fill="#fff" stroke="#4fd169"/><g fill="#4fd169"><circle cx="13" cy="15" r="1.200"/><circle cx="19" cy="15" r="1.200"/><circle cx="22" cy="23" r="1"/><circle cx="27" cy="23" r="1"/></g></svg></button>
    <button class="r"><svg viewBox="0 0 40 40"><circle cx="20" cy="20" r="18" fill="#3f8ff5"/><path d="M10 8l18 10-2 6h4L18 35l3-9h-4l2-3-5-2 3-1-5-3z" fill="#fff"/></svg></button>
    <button class="r"><svg viewBox="0 0 40 40"><rect x="3" y="3" width="34" height="34" rx="7" fill="#fff"/><circle cx="20" cy="20" r="13" fill="#f9c823"/><path d="M20 20L9 13a13 13 0 0 1 22-1l1 3H20z" fill="#e8442e"/><path d="M20 20l-2 13A13 13 0 0 1 9 13z" fill="#33a553"/><circle cx="20" cy="20" r="6" fill="#3f7de8" stroke="#fff" stroke-width="2"/></svg></button>
    <button><svg viewBox="0 0 40 40"><rect x="1" y="1" width="38" height="38" rx="6" fill="#061e33"/><text class="ad" x="20" y="28" fill="#42a5fa">Ps</text></svg></button>
    <button class="r"><svg viewBox="0 0 40 40"><rect x="1" y="1" width="38" height="38" rx="6" fill="#2e0504"/><text class="ad" x="20" y="28" fill="#fa9a1e">Ai</text></svg></button>
    <button class="r"><svg viewBox="0 0 40 40"><path d="M12 4h26v32H12z" fill="#2a66c4"/><path d="M12 4h26v11H12z" fill="#53a0ea"/><path d="M12 27h26v9H12z" fill="#1b3f88"/><path d="M2 11h18v18H2z" fill="#1c54b4"/><text class="ms" x="11" y="26">W</text></svg></button>
    <button><svg viewBox="0 0 40 40"><path d="M12 4h26v32H12z" fill="#1f7a48"/><path d="M25 4h13v16H25z" fill="#3cb878"/><path d="M12 27h26v9H12z" fill="#195a38"/><path d="M2 11h18v18H2z" fill="#107040"/><text class="ms" x="11" y="26">X</text></svg></button>
    <button class="r"><svg viewBox="0 0 40 40"><circle cx="20" cy="20" r="18" fill="#b8343a"/><circle cx="23" cy="9" r="5" fill="#fff"/><path d="M16 16h9l-2 21-5 1z" fill="#fff"/></svg></button>
    <button><svg viewBox="0 0 40 40"><path d="M9 4h22l8 11-19 22L1 15z" fill="#fdae22"/><path d="M9 4h22l8 11H1z" fill="#fcc54e"/><path d="M11 15h18l-9 22z" fill="#f58a16"/><path d="M20 4l9 11H11z" fill="#ffdc84"/></svg></button>
    <button class="r"><svg viewBox="0 0 40 40"><path d="M20 1l5 14-5 7z" fill="#7a1440"/><path d="M20 1l-4 14 4 7z" fill="#f5c838"/><path d="M1 16l14-1 5 7-8 4z" fill="#f8e07a"/><path d="M39 16l-14-1-5 7 9 4z" fill="#e8305c"/><path d="M8 38l4-12 8-4v9z" fill="#b898e8"/><path d="M32 38l-3-12-9-4v9z" fill="#2c1660"/></svg></button>
    <button><svg viewBox="0 0 40 40"><circle cx="18" cy="20" r="17" fill="#f08c28"/><circle cx="21" cy="20" r="18" fill="#2a2255"/><path d="M4 15h34M3 20h36M4 25h34" stroke="#eee" stroke-width="2.500"/></svg></button>
    <button class="r"><svg viewBox="0 0 40 40"><circle cx="20" cy="20" r="18.500" fill="#d0aa30" stroke="#333" stroke-width="2.500"/><text class="ue" x="14" y="21">U</text><text class="ue" x="27" y="35">E</text></svg></button>
    <button class="r"><svg viewBox="0 0 40 40"><circle cx="22" cy="20" r="16" fill="#d85434"/><path d="M22 4a16 16 0 0 1 16 16H22z" fill="#f08a6a"/><path d="M2 11h18v18H2z" fill="#b83a1c"/><text class="ms" x="11" y="26">P</text></svg></button>
    <button class="r"><svg viewBox="0 0 40 40"><path d="M3 5l32-4 3 34-33 4z" fill="#ddd"/><path d="M2 3l33 3-1 33-29-3z" fill="#f8f8f8"/><text class="tt" x="20" y="30">T</text></svg></button>
    <button><svg viewBox="0 0 40 40"><rect x="3" y="3" width="34" height="34" rx="7" fill="#fff"/><path d="M8 24h5v9H8z" fill="#f5a623"/><path d="M14 17h5v16h-5z" fill="#ee5a4a"/><path d="M20 8h6v25h-6z" fill="#62c84c"/><path d="M27 13h5v20h-5z" fill="#3f8ff0"/></svg></button>
    <button class="r"><svg viewBox="0 0 40 40"><rect x="3" y="3" width="34" height="34" rx="7" fill="#f4f7fa"/><path d="M10 8h20l1 11H9z" fill="#1f7ee8"/><circle cx="20" cy="13" r="4" fill="#fff"/><path d="M20 19v13M13 33h14" stroke="#1f7ee8" stroke-width="2.500"/></svg></button>
    <button><svg viewBox="0 0 40 40"><rect x="3" y="3" width="34" height="34" rx="7" fill="#fff"/><path d="M30 6L16 32" stroke="#f08c1e" stroke-width="4"/><path d="M8 34h10" stroke="#333"/><text x="6" y="24" font-size="20" fill="#f5a623" font-weight="700">“</text></svg></button>
    <button><svg viewBox="0 0 40 40"><rect x="1" y="1" width="38" height="38" rx="8" fill="#fff"/><g fill="none" stroke-width="4"><circle cx="20" cy="14" r="5" stroke="#e8403c"/><circle cx="13" cy="24" r="6" stroke="#3aa0f4"/><circle cx="27" cy="24" r="6" stroke="#3aa0f4"/></g></svg></button>
    <button class="r"><svg viewBox="0 0 40 40"><rect x="3" y="3" width="34" height="34" rx="7" fill="#b6babd"/><circle cx="20" cy="20" r="14" fill="#3a3c3e"/><circle cx="20" cy="20" r="10" fill="none" stroke="#aaa" stroke-width="2"/><path d="M20 20h10M20 20l-5 9M20 20l-5-9" stroke="#aaa" stroke-width="2"/></svg></button>
    <button class="r"><svg viewBox="0 0 40 40"><rect x="4" y="4" width="32" height="32" rx="7" fill="#14241f" stroke="#b8c4c0" stroke-width="2"/><path d="M6 21h9l2-5 3 12 3-9 2 2h9" fill="none" stroke="#6ac8a4"/></svg></button>
    <button class="r"><svg viewBox="0 0 40 40"><rect x="4" y="4" width="32" height="32" rx="7" fill="#222" stroke="#ccc" stroke-width="2"/><path d="M9 11l4 3-4 3M15 18h5" fill="none" stroke="#ddd" stroke-width="1.500"/></svg></button>
    <button class="r"><svg viewBox="0 0 40 40"><path d="M1 1h38v38H1z" fill="#f2dfd8"/><path d="M8 34L17 5h7l8 29h-6l-2-9-8 2-2 7z" fill="#c22c28"/><path d="M17 21l6-2-3-8z" fill="#f2dfd8"/></svg></button>
    <button><svg viewBox="0 0 40 40"><rect x="0" y="0" width="40" height="40" rx="9" fill="#eef0f8"/><path d="M9 13l11-5 11 5v5l-11-5-10 5M9 18v5l10 5v5l-10-5M31 18v10l-12 6M14 18l11 5v7" fill="none" stroke="#1a66a8" stroke-width="3"/></svg></button>
    <button class="r"><svg viewBox="0 0 40 40"><use href="#rhino"/><text class="rn" x="27" y="19">6</text></svg></button>
    <button><svg viewBox="0 0 40 40"><circle cx="20" cy="20" r="19.500" fill="#eaf2ff"/><circle cx="20" cy="20" r="17" fill="#1d74f5"/><path d="M20 12l8 4v9l-8 4-8-4v-9z" fill="#fff"/><path d="M12 16L20 3M20 12l14-1M28 16l8 9M28 25l-6 12M20 29L6 30M12 25L3 16" stroke="#fff" stroke-width="2"/></svg></button>
    <button><svg viewBox="0 0 40 40"><circle cx="20" cy="20" r="19" fill="#dfe3ea"/><circle cx="20" cy="22" r="16" fill="#0e1a48"/><path d="M28 6q12 7 6 20-6 4-10-4-1-10 4-16z" fill="#6a9cf0"/><ellipse cx="26" cy="17" rx="9" ry="8" fill="#101c50"/></svg></button>
    <button><svg viewBox="0 0 40 40"><use href="#rhino"/><text class="rn" x="27" y="19">7</text></svg></button>
    <i></i>
    <button class="r"><svg viewBox="0 0 40 40"><rect x="3" y="3" width="34" height="34" rx="7" fill="#b9b9b9"/><rect x="10" y="6" width="20" height="28" rx="3" fill="#222"/><path d="M12 9h16v5H12z" fill="#777"/><path d="M13 19h14M13 24h14M13 29h14" stroke="#ddd" stroke-width="3" stroke-dasharray="3 2.500"/><path d="M24 18h3v12h-3z" fill="#f59a23"/></svg></button>
    <button class="r"><svg viewBox="0 0 40 40"><rect x="3" y="3" width="34" height="34" rx="7" fill="#e03c22"/><path d="M10 9q5 9 10 10 5-1 10-10M10 32q5-9 10-10 5 1 10 10" fill="none" stroke="#fff" stroke-width="3"/></svg></button>
    <button class="r"><svg viewBox="0 0 40 40"><rect x="3" y="3" width="34" height="34" rx="5" fill="#fff"/><path d="M5 11h30M5 16h30M5 21h30M5 26h30M5 31h30" stroke="#ccc"/><path d="M33 1L20 36" stroke="#5a6f88" stroke-width="3.500"/></svg></button>
    <button class="r"><svg viewBox="0 0 40 40"><rect x="3" y="3" width="34" height="34" rx="7" fill="#24262c"/><path d="M5 22h4l2-4 3 7 3-10 3 12 3-9 3 4h9" fill="none" stroke="#ccd"/><path d="M25 3v34" stroke="#3a9cf0"/></svg></button>
    <button class="r"><svg viewBox="0 0 40 40"><path d="M3 5l28-2 6 4v30l-30-1-4-5z" fill="#7a4a1e"/><path d="M9 6h27v9H9z" fill="#3a6ed8"/><path d="M9 16h28v9H9z" fill="#f0c83a"/><path d="M10 26h27v9H10z" fill="#3fae48"/><g font-size="7" font-weight="700" fill="#222"><text x="16" y="13">RAR</text><text x="17" y="23">ZIP</text><text x="19" y="33">7Z</text></g></svg></button>
    <button class="r"><svg viewBox="0 0 40 40"><rect x="3" y="3" width="34" height="34" rx="7" fill="#eee"/><path d="M6 6h28v13H6z" fill="#4a80c8"/><path d="M6 19h28v9H6z" fill="#e8d8c0"/><rect x="20" y="20" width="16" height="18" rx="3" fill="#555" stroke="#ccc"/><path d="M23 23h10v5H23z" fill="#ddd"/></svg></button>
    <i></i>
    <button><svg viewBox="0 0 40 40"><path d="M1 7h14l3 3h21v26H1z" fill="#58b8ea"/><path d="M1 13h38v23H1z" fill="#74cbf5"/><circle cx="20" cy="22" r="7" fill="#4aa4d8"/><path d="M20 18v8M17 23l3 3 3-3" fill="none" stroke="#d8f0fc" stroke-width="1.500"/></svg></button>
    <button><svg viewBox="0 0 40 40"><path d="M6 5h28l-4 33H11z" fill="#6c7075"/><ellipse cx="20" cy="6" rx="14" ry="3" fill="#93979b"/></svg></button>
  </footer>
  <div class="mark"><div><strong>学犀牛</strong><span>xuexiniu.com</span></div><em>中文网</em></div>
</section>
</body>
</html>
```
FILE: styles.css
```css
* { box-sizing: border-box; }
body {
  margin: 0;
  min-height: 100vh;
  display: flex;
  flex-direction: column;
  background: #000;
  color: #ddd;
  font-family: Inter, "Noto Sans CJK SC", sans-serif;
  font-size: 15px;
  font-feature-settings: "calt" 0;
  overflow: hidden;
}
h1, h2, h3 { margin: 0; font-weight: 500; }
button { margin: 0; padding: 0; border: 0; background: none; color: inherit; font: inherit; white-space: nowrap; }
svg { display: block; flex: none; }
.defs { position: absolute; width: 0; height: 0; }

/* menu bar */
.menubar { height: 29px; display: flex; justify-content: space-between; align-items: center; padding: 0 22px 0 26px; color: #f0f0f0; font-weight: 500; }
.menus { display: flex; gap: 25px; align-items: center; }
.status { display: flex; gap: 20px; align-items: center; }
.status svg { width: 20px; height: 20px; fill: #eee; }
.status svg.wide { width: 24px; }
.status svg.wider { width: 29px; }
.status time { font-size: 16px; margin-left: 3px; }
.ime { width: 20px; height: 20px; background: #eee; color: #000; border-radius: 3px; font-size: 15px; line-height: 20px; text-align: center; }

/* modelling window */
.rhino { background: #282828; border: 1px solid #5c5c5c; border-bottom: 0; border-radius: 12px 12px 0 0; overflow: hidden; }
.titlebar, .ghtitle { position: relative; height: 32px; display: flex; align-items: center; justify-content: center; }
.titlebar { height: 30px; }
.titlebar h1 { color: #838383; font-size: 15px; }
.lights { position: absolute; left: 9px; display: flex; gap: 9px; }
.lights i { width: 14px; height: 14px; border-radius: 50%; background: #ed6a5e; }
.lights i:nth-child(2) { background: #f5bf4f; }
.lights i:nth-child(3) { background: #61c554; }
.lights.off i { background: #4c4c4c; }
.osnap { height: 40px; display: flex; align-items: center; padding: 0 13px 3px; border-bottom: 2px solid #141414; }
.modes { display: flex; gap: 10px; margin-left: 52px; color: #777; font-size: 14px; }
.modes button { height: 18px; line-height: 18px; padding: 0 14px; border-radius: 4px; }
.modes button:first-child { margin-right: 9px; }
.modes button:nth-child(2) { margin-right: 8px; }
.modes .on { background: #474747; }
.presets { display: flex; align-items: center; gap: 11px; margin: 0 520px 0 auto; }
.preset { position: relative; width: 230px; height: 22px; border: 1px solid #3a3a3a; border-radius: 4px; color: #505050; font-size: 13px; padding-left: 18px; }
.preset i { position: absolute; left: 4px; top: 2px; width: 16px; height: 16px; background: #151515; }
.work { display: grid; grid-template-columns: 155px 1fr 315px; }
.strip { height: 29px; background: #333; border-bottom: 1px solid #444; }
.left { background: #1f1f1f; border-right: 1px solid #777; }
.cmd { display: block; width: 133px; height: 24px; margin: 13px 0 11px 10px; padding: 0 4px; background: #272727; border: 1px solid #303030; color: #ddd; font: inherit; }
.cmd::placeholder { color: #666; }
.tools { display: grid; grid-auto-rows: 31px; }
.tools.five { grid-template-columns: repeat(5, 31px); }
.tools.seven { grid-template-columns: repeat(7, 31px); }
.tools button { position: relative; }
.tools svg { width: 31px; height: 31px; }
.tools .m::after { content: ""; position: absolute; right: 4px; bottom: 4px; border: 3px solid transparent; border-top: 5px solid #e4e4e4; border-bottom: 0; }
.tools .sel { background: #3a3a3a; outline: 1px solid #5a5a5a; outline-offset: -1px; }
.tools text { font: 9px "DejaVu Sans Mono", monospace; fill: #ddd; }
.l { fill: none; stroke: #a4a4a4; stroke-width: 1.3; }
.w { stroke-width: 2; }
.k { fill: none; stroke: #a4a4a4; stroke-width: 1.3; }
.k0 { fill: none; }
.k, .k0 { marker: url(#sq); }

.center { min-width: 0; display: flex; flex-direction: column; }
.tabs { height: 29px; background: #333; display: flex; align-items: center; padding: 0 15px 3px 12px; color: #a0a0a0; border-bottom: 1px solid #888; }
.tabs svg { margin-right: 20px; }
.tabs svg + svg { margin-right: 16px; }
.tabs i { width: 2px; height: 18px; background: #6a6a6a; }
.tabs button { margin: 0 23px; }
.tabs .on { color: #5cb8e4; }
.tabs .layout { margin: 0 0 0 auto; font-size: 14px; }
.view { position: relative; flex: 1; background: #9ca3ab; overflow: hidden; }
.scene { position: absolute; }
.gd path { fill: none; marker: url(#gdot); }
.rd path { fill: none; marker: url(#rdot); }
.vlabel { position: absolute; left: 0; top: 3px; padding: 0 6px; line-height: 24px; background: #8d8f91; color: #fff; }
.palettes { position: absolute; right: 3px; top: 0; display: flex; flex-direction: column; gap: 2px; }
.pal { width: 217px; background: #161616; border-radius: 7px; box-shadow: inset 0 0 0 1px #555, 0 0 0 1px #444; }
.pal.last { padding-bottom: 20px; }
.pal h2 { position: relative; height: 22px; line-height: 21px; text-align: center; font-size: 13px; color: #707070; background: #262626; border-bottom: 1px solid #0a0a0a; border-radius: 7px 7px 0 0; box-shadow: inset 0 1px #555; }
.pal h2 i { position: absolute; left: 5px; top: 5px; width: 11px; height: 11px; border-radius: 50%; background: #444; }

.right { background: #1f1f1f; border-left: 1px solid #777; font-size: 13px; }
.right .strip { display: flex; align-items: center; justify-content: flex-end; padding: 0 1px 3px 0; border: 0; }
.right .strip h2 { flex: 1; text-align: center; font-size: 13px; padding-left: 20px; }
.gear { width: 34px; height: 18px; border: 1px solid #666; border-radius: 5px; padding: 1px; }
.pages { height: 40px; background: #333; display: flex; justify-content: center; align-items: center; gap: 9px; padding: 0 8px 6px 0; }
.props { padding: 10px 9px 0 9px; }
.row { display: grid; grid-template-columns: 56px 1fr; align-items: center; gap: 8px; height: 22px; margin-bottom: 7px; padding-right: 16px; }
.row > :first-child { text-align: right; }
.row input { height: 21px; width: 100%; background: #272727; border: 1px solid #333; color: #ddd; font: inherit; padding: 0 4px; }
hr { border: 0; border-top: 1px solid #3c3c3c; margin: 11px 0 9px; }
h3 { font-size: 13px; line-height: 20px; }
.opts { display: flex; flex-direction: column; padding: 0 0 14px 24px; line-height: 18px; }
.opts label, .checks label { display: flex; align-items: center; gap: 6px; }
.opts input { appearance: none; width: 14px; height: 14px; margin: 0; border-radius: 50%; background: #4a4a4a; }
.opts input:checked { background: radial-gradient(#eee 2px, #5a5a5a 3px); }
.pick { display: flex; align-items: center; padding: 6px 0 7px 26px; gap: 6px; height: 32px; }
.pick select { appearance: none; background: none; border: 0; color: #ddd; font: inherit; width: 80px; padding: 0 4px; }
.checks { display: flex; flex-direction: column; gap: 4px; padding: 0 0 6px 24px; line-height: 20px; color: #5e5e5e; }
.checks input { appearance: none; width: 14px; height: 14px; margin: 0; border-radius: 3px; background: #333; }

/* node editor window */
.gh { position: relative; flex: 1; display: flex; flex-direction: column; margin-top: -3px; background: #212121; border-top: 2px solid #4a4a4a; border-radius: 12px 12px 0 0; overflow: hidden; }
.ghtitle h1 { font-size: 16px; font-weight: 600; color: #aaa; }
.gh .lights { left: 11px; }
.cats { height: 28px; background: #555; display: grid; grid-template-columns: repeat(19, 1fr); width: 100%; padding-right: calc(100% - 634px); border-bottom: 1px solid #666; color: #383838; font-size: 18px; font-weight: 900; }
.cats button { display: grid; place-items: center; padding-top: 2px; }
.cats svg { width: 20px; height: 20px; fill: #383838; }
.cats .on { background: #777; border-radius: 8px 8px 0 0; }
.s { fill: none; stroke: #383838; stroke-width: 2.5; }
.t1 { fill: none; stroke: #333; stroke-width: 1.5; }
.ribbon { display: flex; gap: 5px; padding: 2px 5px 1px; background: linear-gradient(#747474, #828282); border-radius: 0 8px 8px 0; }
.grp { border: 2px solid #a2a2a2; border-radius: 5px; background: #787878; outline: 1px solid #5a5a5a; outline-offset: -3px; }
.grp h2 { position: relative; height: 15px; line-height: 14px; text-align: center; padding-right: 14px; font-size: 12px; font-weight: 400; color: #303030; background: #636363; border-radius: 0 0 4px 4px; }
.grp h2::after { content: "+"; position: absolute; right: 3px; color: #ccc; font-weight: 700; }
.secs { display: flex; padding: 1px 3px 2px 1px; }
.sec { display: grid; grid-template: 33px 33px / 33px; }
.sec.c2 { grid-template-columns: repeat(2, 33px); }
.sec.c3 { grid-template-columns: repeat(3, 33px); }
.sec.c4 { grid-template-columns: repeat(4, 33px); }
.sec + .sec { margin-left: 5px; padding-left: 5px; border-left: 2px solid #949494; }
.sec button { display: grid; place-items: center; }
.sec svg { width: 30px; height: 30px; fill: none; }
.sec text { fill: #eee; font-family: "DejaVu Sans Mono", monospace; }
.sec .sf { font-family: "Liberation Serif", serif; font-weight: 700; text-anchor: middle; }
.sec .ct { font-size: 12px; fill: #222; text-anchor: middle; }
.sec .fx { font: italic 15px "Liberation Serif", serif; fill: #222; text-anchor: middle; }
.h1, .h2, .h3 { fill: none; stroke: #eee; stroke-width: 1.2; }
.h2 { stroke-width: 2; }
.h3 { stroke-width: 3; }
.f { fill: #eee; }

.bar { height: 48px; margin-top: 12px; border-top: 1px solid #333; display: flex; align-items: center; padding: 0 15px 0 5px; gap: 6px; }
.bar button { display: grid; place-items: center; height: 26px; border-radius: 7px; }
.bar svg { width: 20px; height: 20px; }
.b1 { width: 33px; background: #2a2a2a; border: 1px solid #383838; }
.b2 { width: 38px; background: #555; }
.bar .dim { background: #252525; border-color: #303030; }
.bar .lit { background: #5c5c5c; }
.bar > i { width: 1px; height: 19px; background: #444; margin: 0 2px; }
.bar > i.near { margin: 0; }
.grow { flex: 1; }
.zoom { display: flex; width: 63px; height: 24px; background: #2a2a2a; border: 1px solid #3c3c3c; border-radius: 6px; overflow: hidden; padding: 1px; margin-right: 4px; }
.zoom select { appearance: none; width: 40px; padding: 0 0 0 3px; border: 0; background: none; color: #ddd; font: 14px Inter, sans-serif; }
.zoom span { width: 19px; background: #2a62d4; border-radius: 5px; display: grid; place-items: center; }
.zoom svg { width: 10px; height: 7px; }
.bar .eye { margin: 0 11px 0 14px; }

.canvas { position: relative; flex: 1; overflow: hidden; background: #d4d0c8; font-size: 22px; color: #0c0c0c; box-shadow: inset 2px 0 #222; }
.canvas::after { content: ""; position: absolute; left: 0; right: 0; bottom: 0; height: 110px; background: linear-gradient(transparent, rgba(0, 0, 0, .22)); box-shadow: inset 1px 0 #222; }
.sheet { position: absolute; left: 2px; right: 0; top: 0; height: 65px; background: repeating-linear-gradient(135deg, rgba(0, 0, 0, .05) 0 1px, transparent 1px 4px), linear-gradient(#cdc9c1, #b9b6af 45%, #888882); }
.wires { position: absolute; left: 0; top: 0; }
.gl { stroke: rgba(0, 0, 0, .13); stroke-width: 2; fill: none; }
.wire path { fill: none; stroke: rgba(0, 0, 0, .6); stroke-width: 11; }
.wire .d { stroke-dasharray: 22 16; stroke-linecap: round; }
.wire .thin { stroke-width: 5; }
.wire.g path:first-child { stroke: url(#w1); }
.wire.g path:last-child { stroke: url(#w2); }
.grip circle { fill: #fff; stroke: #080808; stroke-width: 4; }
.node { position: absolute; display: flex; align-items: center; padding: 4px 0 3px; border: 2px solid #262626; border-radius: 7px; background: linear-gradient(#fcfcfc, #e9e9e9 17px, #dfdfdf 18px, #c6c6c6); box-shadow: 0 0 0 2px rgba(255, 255, 255, .6), 0 4px 5px rgba(0, 0, 0, .35); }
.in, .out { align-self: stretch; display: flex; flex-direction: column; flex: none; line-height: 30px; white-space: nowrap; }
.in span, .out span { flex: 1; display: flex; align-items: center; }
.in span { justify-content: flex-end; }
.node > svg { width: 44px; margin: 0 11px; }
.slate { background: linear-gradient(#e8e8ec, #cfcfd6 17px, #a6a6b3 18px, #8b8a98); }
.green { background: linear-gradient(#e6fad0, #c8f29a 17px, #aeee66 18px, #94d350); border-color: #1c3c10; }
.n-sq { left: 67px; top: 50px; width: 248px; height: 182px; }
.n-sq .in { width: 97px; }
.n-tree { left: 381px; top: 249px; width: 215px; height: 140px; }
.n-tree .in { width: 56px; }
.n-tree > svg { width: 52px; margin: 0 7px; }
.n-item { left: 697px; top: 249px; width: 174px; height: 140px; }
.n-item .in { width: 67px; }
.n-d1 { left: 926px; top: 159px; width: 289px; height: 96px; }
.n-d2 { left: 930px; top: 310px; width: 289px; height: 96px; }
.slate .in { width: 110px; }
.n-cull { left: 1327px; top: 85px; width: 208px; height: 139px; }
.n-cull .in { width: 84px; }
.n-line { left: 1665px; top: 202px; width: 251px; height: 96px; }
.n-line .in { width: 120px; }
.n-pt { left: 1317px; top: 382px; width: 107px; height: 53px; padding: 0; }
.n-pt > svg { width: 54px; margin: 0 auto; }
.down { position: absolute; left: 5px; bottom: 10px; width: 30px; height: 30px; border: 2px solid #333; border-radius: 5px; background: linear-gradient(#fff, #bbb); display: grid; place-items: center; }
.prof { position: absolute; left: 67px; top: 234px; width: 248px; height: 30px; line-height: 27px; text-align: center; border: 2px solid #111; background: linear-gradient(#ea4e2c, #a9361c); }
.prof svg { position: absolute; left: 110px; top: -14px; }

/* dock */
.dock { position: absolute; left: 50%; bottom: 0; transform: translateX(-50%); width: max-content; height: 54px; display: flex; padding: 0 2px; background: #8b877e; border: 1px solid #7a766e; border-bottom: 0; border-radius: 12px 12px 0 0; box-shadow: inset 0 1px #9c988f; }
.dock button { position: relative; width: 44px; height: 48px; display: grid; justify-content: center; align-content: end; }
.dock svg { width: 40px; height: 40px; margin-bottom: 2px; }
.dock > i { width: 18px; height: 40px; margin-top: 8px; background: linear-gradient(#a9a59c, #a9a59c) center / 1px 100% no-repeat; }
.dock .r::after { content: ""; position: absolute; left: 20px; bottom: -4px; width: 5px; height: 5px; border-radius: 50%; background: #f4f4f4; }
.cj, .ad, .ms, .ue, .tt { text-anchor: middle; }
.ad { font-size: 21px; font-weight: 600; }
.ms { font-size: 14px; font-weight: 700; fill: #fff; }
.ue { font-size: 19px; font-weight: 800; font-style: italic; fill: #222; }
.tt { font: 26px "Liberation Serif", serif; fill: #222; }
.rn { font-size: 18px; font-weight: 700; fill: #aaa; }
.mark { position: absolute; right: 33px; bottom: 34px; width: 98px; height: 42px; display: flex; align-items: center; justify-content: center; gap: 3px; border-radius: 4px; background: rgba(255, 255, 255, .35); color: #000; }
.mark div { display: flex; flex-direction: column; align-items: center; }
.mark strong { font-family: "Noto Sans CJK SC", sans-serif; font-size: 21px; line-height: 22px; font-weight: 900; }
.mark span { font-size: 10px; line-height: 13px; font-weight: 500; }
.mark em { width: 18px; font-style: normal; font-weight: 700; font-size: 11px; line-height: 12px; color: #fff; background: #d22438; text-align: center; white-space: normal; padding: 0 3px; }
```
